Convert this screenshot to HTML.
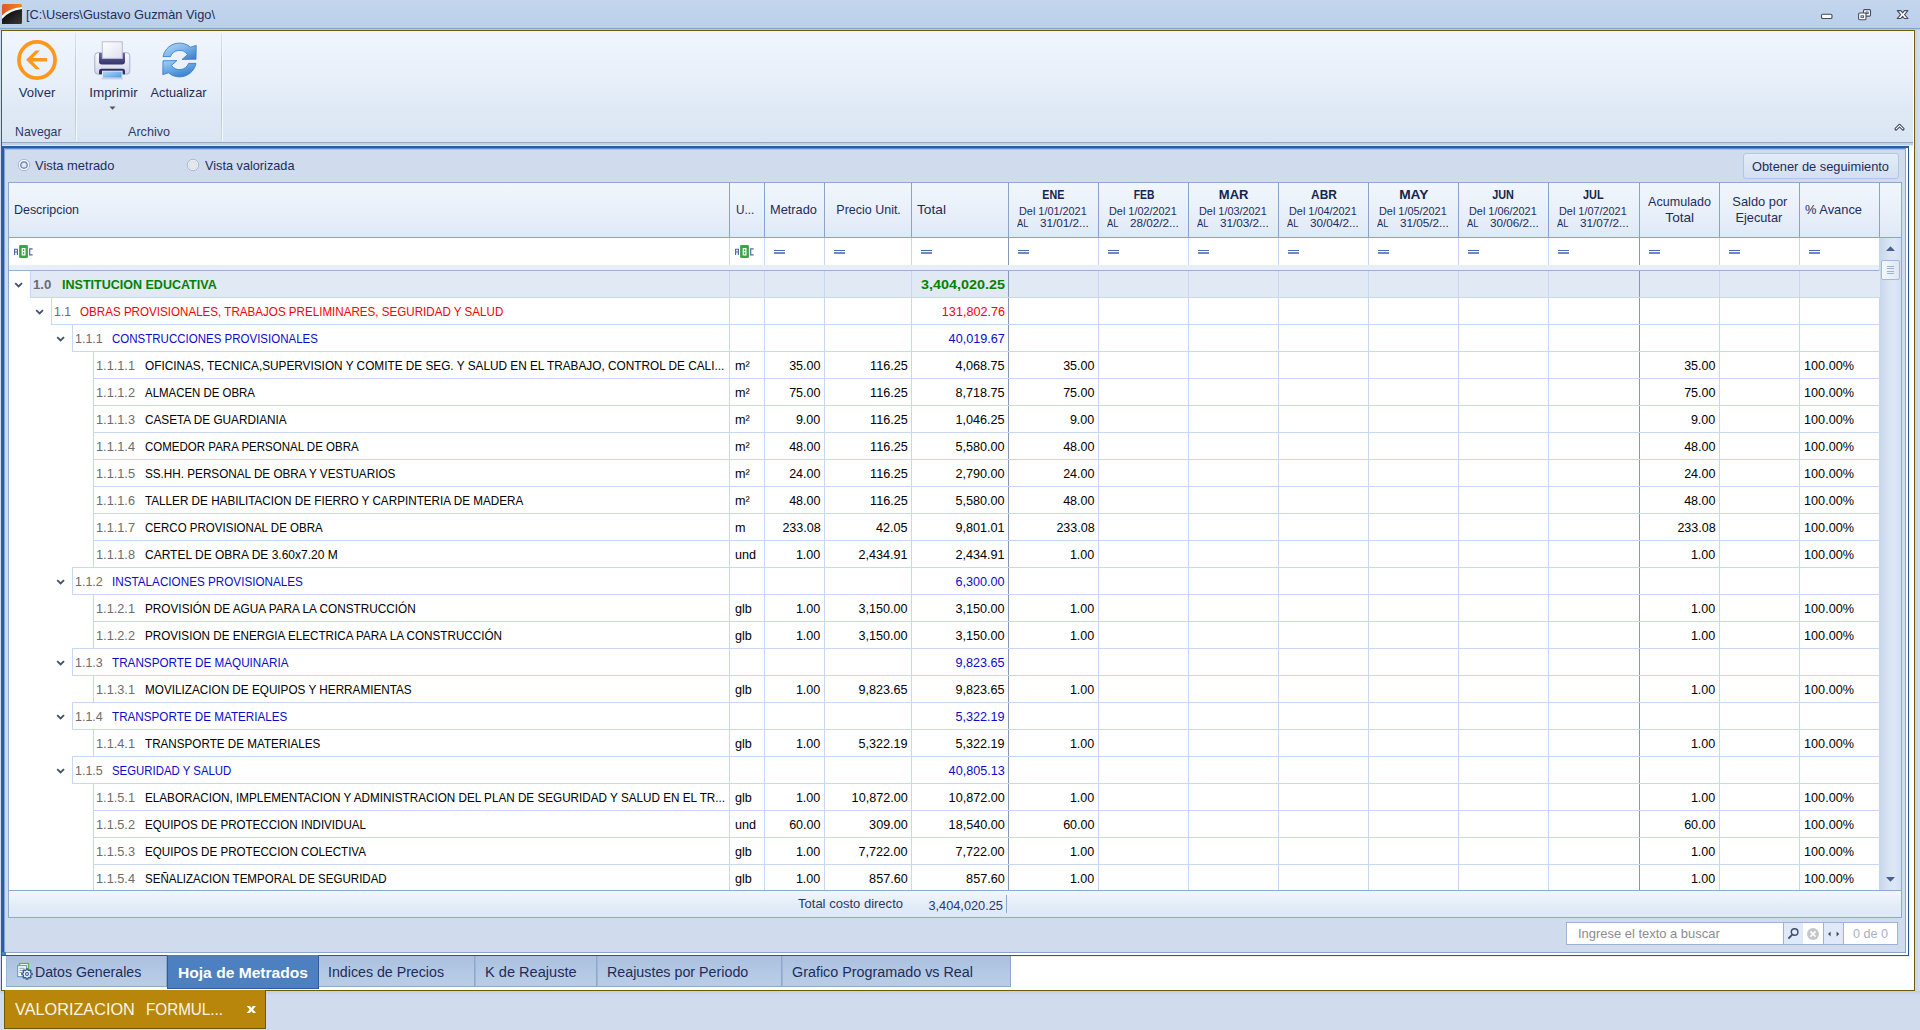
<!DOCTYPE html>
<html><head><meta charset="utf-8"><title>Valorizacion</title>
<style>
html,body{margin:0;padding:0}
body{width:1920px;height:1030px;overflow:hidden;position:relative;background:#d0dcee;font-family:"Liberation Sans", sans-serif}
body>div,body>svg,body>span{position:absolute}
.t{white-space:pre;display:inline-block}
</style></head><body>
<div style="left:0px;top:0px;width:1920px;height:28px;background:linear-gradient(#c3d6ee,#bccfe9);"></div>
<div style="left:0px;top:28px;width:1920px;height:1px;background:#86a2c6;"></div>
<div style="left:0px;top:29px;width:1920px;height:1px;background:#b4c8e3;"></div>
<svg style="left:2px;top:4px" width="20" height="20" viewBox="0 0 20 20"><defs><linearGradient id="ig" x1="0" y1="0" x2="1" y2="0"><stop offset="0" stop-color="#e0562a"/><stop offset="1" stop-color="#f8861c"/></linearGradient><linearGradient id="ib" x1="0" y1="0" x2="1" y2="1"><stop offset="0" stop-color="#000"/><stop offset="1" stop-color="#3a3a3a"/></linearGradient></defs><rect width="20" height="20" rx="1.5" fill="url(#ig)"/><path d="M0 20 L0 14 Q5 6 20 4.5 L20 18.5 Q20 20 18.5 20 Z" fill="url(#ib)"/><path d="M0 11.5 Q6 4.5 20 3 L20 5 Q7 6.5 0 15 Z" fill="#fff"/></svg>
<span class="t" style="left:26px;transform-origin:0 0;top:7.7955px;font-size:13px;line-height:13px;color:#1e2c5c;transform:scaleX(0.9846);">[C:\Users\Gustavo Guzmàn Vigo\</span>
<svg style="left:1816px;top:6px" width="100" height="18" viewBox="0 0 100 18">
<rect x="5.5" y="8.3" width="10.5" height="4.2" rx="1.3" fill="#fff" stroke="#444a63" stroke-width="1.1"/>
<rect x="47.5" y="3.6" width="7" height="6.5" rx="1.2" fill="#fff" stroke="#444a63" stroke-width="1.1"/><rect x="50" y="6" width="2.2" height="1.6" fill="#fff" stroke="#444a63" stroke-width="0.9"/>
<rect x="42.6" y="7" width="7.4" height="6.8" rx="1.2" fill="#fff" stroke="#444a63" stroke-width="1.1"/><rect x="45" y="9.8" width="2.6" height="1.6" fill="#fff" stroke="#444a63" stroke-width="0.9"/>
<path d="M81.3 4.6 L84.9 4.6 L86.6 6.9 L88.3 4.6 L91.9 4.6 L88.6 8.6 L92 12.5 L88.4 12.5 L86.6 10.3 L84.8 12.5 L81.2 12.5 L84.6 8.6 Z" fill="#fff" stroke="#444a63" stroke-width="1.1" stroke-linejoin="round"/>
</svg>
<div style="left:1px;top:30px;width:1914px;height:961px;background:#fff;border:1px solid #6e5c06;box-sizing:border-box;"></div>
<div style="left:1915px;top:30px;width:5px;height:961px;background:linear-gradient(90deg,#c6d5ea,#d3e0f1);"></div>
<div style="left:2px;top:31px;width:1911px;height:111px;background:linear-gradient(#f0f5fd 0%,#e9f0fa 40%,#dfe9f6 70%,#dae5f3 100%);"></div>
<div style="left:2px;top:142px;width:1911px;height:1px;background:#93a8c6;"></div>
<div style="left:2px;top:143px;width:1911px;height:2px;background:#c4d1e3;"></div>
<div style="left:2px;top:145px;width:1911px;height:1px;background:#e0e9f5;"></div>
<div style="left:75px;top:33px;width:1px;height:108px;background:linear-gradient(#dbe4f1,#bccadf 30%,#bccadf 80%,#cfdaea);"></div>
<div style="left:76px;top:33px;width:1px;height:108px;background:#f3f7fc;"></div>
<div style="left:221px;top:33px;width:1px;height:108px;background:linear-gradient(#dbe4f1,#bccadf 30%,#bccadf 80%,#cfdaea);"></div>
<div style="left:222px;top:33px;width:1px;height:108px;background:#f3f7fc;"></div>
<svg style="left:14px;top:37px" width="46" height="46" viewBox="14 37 46 46">
<circle cx="37" cy="60" r="18.05" fill="none" stroke="#ff9719" stroke-width="3.75"/>
<path d="M26.1 59.8 L35.6 50.4 L40.1 50.4 L32.4 58.1 L47 58.1 L47 61.5 L32.4 61.5 L40.1 69.3 L35.6 69.3 Z" fill="#ff9719"/>
</svg>
<span class="t" style="left:18.9297px;transform-origin:50% 0;top:85.9955px;font-size:13px;line-height:13px;color:#1e2c5c;transform:scaleX(1.0099);">Volver</span>
<svg style="left:92px;top:39px" width="40" height="42" viewBox="92 39 40 42"><defs>
<linearGradient id="pp" x1="0" y1="0" x2="1" y2="1"><stop offset="0" stop-color="#ffffff"/><stop offset="1" stop-color="#dfe0ee"/></linearGradient>
<linearGradient id="pb" x1="0" y1="0" x2="0" y2="1"><stop offset="0" stop-color="#fbfbfe"/><stop offset="1" stop-color="#d3d6e9"/></linearGradient>
<linearGradient id="pd" x1="0" y1="0" x2="0" y2="1"><stop offset="0" stop-color="#6a6aa2"/><stop offset="0.55" stop-color="#4a4a84"/><stop offset="1" stop-color="#35356a"/></linearGradient>
<linearGradient id="pt" x1="0" y1="0" x2="1" y2="1"><stop offset="0" stop-color="#b4dbf7"/><stop offset="1" stop-color="#4a97e2"/></linearGradient></defs>
<rect x="94.8" y="52.7" width="35" height="21.4" rx="3" fill="url(#pb)" stroke="#a9aed0" stroke-width="1"/>
<path d="M99 53 H125 V61.5 Q125 64.4 122 64.4 H102 Q99 64.4 99 61.5 Z" fill="url(#pd)"/>
<rect x="102.3" y="41.8" width="20" height="16.6" fill="url(#pp)" stroke="#b9bbd8" stroke-width="1"/>
<path d="M99 74.2 V71 Q99 68.8 101.5 68.8 H122.5 Q125 68.8 125 71 V74.2 Z" fill="#2f2f60"/>
<rect x="102.5" y="71.2" width="19.6" height="6.9" fill="url(#pt)" stroke="#e4e8f6" stroke-width="1"/>
<path d="M101.5 78.8 H123" stroke="#b9bbd8" stroke-width="0.8"/>
</svg>
<span class="t" style="left:89.7313px;transform-origin:50% 0;top:85.9955px;font-size:13px;line-height:13px;color:#1e2c5c;transform:scaleX(1.0333);">Imprimir</span>
<svg style="left:109px;top:106px" width="8" height="5"><path d="M0.5 0.5 L6.5 0.5 L3.5 3.8 Z" fill="#555"/></svg>
<svg style="left:159px;top:40px" width="40" height="38" viewBox="159 40 40 38"><defs>
<linearGradient id="rg" x1="0" y1="0" x2="1" y2="1"><stop offset="0" stop-color="#b9dbf6"/><stop offset="0.5" stop-color="#7db5ea"/><stop offset="1" stop-color="#3579cb"/></linearGradient>
<linearGradient id="rg2" x1="0" y1="0" x2="0.6" y2="1"><stop offset="0" stop-color="#a9d1f3"/><stop offset="0.5" stop-color="#6aa8e6"/><stop offset="1" stop-color="#3a80d1"/></linearGradient></defs>
<path d="M163 56.6 A16.85 16.85 0 0 1 190.5 47.2 L196.2 45.4 L196 59.2 L182.1 59.4 L187.5 54.7 A9.6 9.6 0 0 0 170.5 56.6 Z" fill="url(#rg)" stroke="#3a7fd0" stroke-width="0.9" stroke-linejoin="round"/>
<path d="M196 63.4 A16.85 16.85 0 0 1 168.5 72.8 L162.8 74.6 L163 60.8 L176.9 60.6 L171.5 65.3 A9.6 9.6 0 0 0 188.5 63.4 Z" fill="url(#rg2)" stroke="#3a7fd0" stroke-width="0.9" stroke-linejoin="round"/>
</svg>
<span class="t" style="left:150.461px;transform-origin:50% 0;top:85.9955px;font-size:13px;line-height:13px;color:#1e2c5c;transform:scaleX(0.9811);">Actualizar</span>
<span class="t" style="left:15.2px;transform-origin:0 0;top:124.995px;font-size:13px;line-height:13px;color:#2b3a6b;transform:scaleX(0.9463);">Navegar</span>
<span class="t" style="left:128px;transform-origin:0 0;top:124.995px;font-size:13px;line-height:13px;color:#2b3a6b;transform:scaleX(0.9686);">Archivo</span>
<svg style="left:1893px;top:121px" width="14" height="11"><path d="M3 8 L6.5 4.5 L10 8" fill="none" stroke="#2b3350" stroke-width="3.1" stroke-linejoin="round" stroke-linecap="round"/><path d="M3.1 7.9 L6.5 4.6 L9.9 7.9" fill="none" stroke="#fff" stroke-width="1.25" stroke-linecap="round"/></svg>
<div style="left:2px;top:146px;width:1907px;height:810px;background:#fff;"></div>
<div style="left:5px;top:150px;width:1901px;height:803px;background:#d0dcee;"></div>
<div style="left:2px;top:146px;width:1907px;height:2px;background:#2d5ca6;"></div>
<div style="left:2px;top:148px;width:1907px;height:1px;background:#5e8ccd;"></div>
<div style="left:2px;top:149px;width:1907px;height:1px;background:#a7c0e1;"></div>
<div style="left:2px;top:146px;width:2px;height:810px;background:#2d5ca6;"></div>
<div style="left:4px;top:148px;width:1px;height:805px;background:#7fa2d6;"></div>
<div style="left:1905px;top:150px;width:1px;height:803px;background:#8ba5cd;"></div>
<div style="left:1906px;top:148px;width:2px;height:807px;background:#fff;"></div>
<div style="left:1908px;top:146px;width:1px;height:810px;background:#2a5298;"></div>
<div style="left:5px;top:952px;width:1901px;height:1px;background:#8ba5cd;"></div>
<div style="left:5px;top:953px;width:1903px;height:2px;background:#fff;"></div>
<div style="left:2px;top:952px;width:4px;height:3px;background:#4a7fcb;"></div>
<div style="left:2px;top:955px;width:1907px;height:1px;background:#2a5298;"></div>
<div style="left:1909px;top:150px;width:1px;height:807px;background:#f4f2ee;"></div>
<div style="left:6px;top:956px;width:1904px;height:1px;background:#f4f2ee;"></div>
<svg style="left:15.6px;top:156.8px" width="16" height="16" viewBox="0 0 16 16"><circle cx="8" cy="8" r="5.7" fill="#fff" stroke="#a3b7d8" stroke-width="1"/><circle cx="8" cy="8" r="3.2" fill="#dfe9f6" stroke="#5f7fb3" stroke-width="1.25"/></svg>
<svg style="left:185.4px;top:156.8px" width="16" height="16" viewBox="0 0 16 16"><circle cx="8" cy="8" r="5.7" fill="#fff" stroke="#a3b7d8" stroke-width="1"/><circle cx="8" cy="8" r="4.1" fill="#e6e7ea" stroke="#d3d6dc" stroke-width="0.8"/></svg>
<span class="t" style="left:35px;transform-origin:0 0;top:158.695px;font-size:13px;line-height:13px;color:#1e2c5c;transform:scaleX(0.9941);">Vista metrado</span>
<span class="t" style="left:205px;transform-origin:0 0;top:158.695px;font-size:13px;line-height:13px;color:#1e2c5c;transform:scaleX(0.9776);">Vista valorizada</span>
<div style="left:1743px;top:153px;width:156px;height:26px;background:linear-gradient(#e3ecf8,#d3e0f1);border:1px solid #b4c6e0;border-radius:3px;box-sizing:border-box;"></div>
<span class="t" style="left:1752.2px;transform-origin:0 0;top:159.895px;font-size:13px;line-height:13px;color:#1e2c5c;transform:scaleX(0.9873);">Obtener de seguimiento</span>
<div style="left:8px;top:182px;width:1894px;height:736px;background:#fff;border:1px solid #8fa8cd;box-sizing:border-box;"></div>
<div style="left:9px;top:183px;width:1892px;height:54px;background:linear-gradient(#f1f6fc 0%,#eaf1fa 45%,#dfe9f6 100%);"></div>
<div style="left:9px;top:237px;width:1892px;height:1px;background:#8aa3c8;"></div>
<div style="left:729px;top:183px;width:1px;height:54px;background:#8aa3c8;"></div>
<div style="left:764px;top:183px;width:1px;height:54px;background:#8aa3c8;"></div>
<div style="left:824px;top:183px;width:1px;height:54px;background:#8aa3c8;"></div>
<div style="left:911px;top:183px;width:1px;height:54px;background:#8aa3c8;"></div>
<div style="left:1008px;top:183px;width:1px;height:54px;background:#8aa3c8;"></div>
<div style="left:1098px;top:183px;width:1px;height:54px;background:#8aa3c8;"></div>
<div style="left:1188px;top:183px;width:1px;height:54px;background:#8aa3c8;"></div>
<div style="left:1278px;top:183px;width:1px;height:54px;background:#8aa3c8;"></div>
<div style="left:1368px;top:183px;width:1px;height:54px;background:#8aa3c8;"></div>
<div style="left:1458px;top:183px;width:1px;height:54px;background:#8aa3c8;"></div>
<div style="left:1548px;top:183px;width:1px;height:54px;background:#8aa3c8;"></div>
<div style="left:1639px;top:183px;width:1px;height:54px;background:#8aa3c8;"></div>
<div style="left:1719px;top:183px;width:1px;height:54px;background:#8aa3c8;"></div>
<div style="left:1799px;top:183px;width:1px;height:54px;background:#8aa3c8;"></div>
<div style="left:1879px;top:183px;width:1px;height:54px;background:#8aa3c8;"></div>
<span class="t" style="left:14px;transform-origin:0 0;top:203.195px;font-size:13px;line-height:13px;color:#1e2c5c;transform:scaleX(0.9570);">Descripcion</span>
<span class="t" style="left:735.5px;transform-origin:0 0;top:203.195px;font-size:13px;line-height:13px;color:#1e2c5c;transform:scaleX(0.9044);">U...</span>
<span class="t" style="left:770px;transform-origin:0 0;top:203.195px;font-size:13px;line-height:13px;color:#1e2c5c;transform:scaleX(0.9853);">Metrado</span>
<span class="t" style="left:834.598px;transform-origin:50% 0;top:203.195px;font-size:13px;line-height:13px;color:#1e2c5c;transform:scaleX(0.9598);">Precio Unit.</span>
<span class="t" style="left:917px;transform-origin:0 0;top:203.195px;font-size:13px;line-height:13px;color:#1e2c5c;transform:scaleX(1.0557);">Total</span>
<span class="t" style="left:1041.16px;transform-origin:50% 0;top:188.842px;font-size:12px;line-height:12px;color:#15254f;font-weight:bold;transform:scaleX(0.8911);">ENE</span>
<span class="t" style="left:1019px;transform-origin:0 0;top:205.689px;font-size:11px;line-height:11px;color:#1e2c5c;transform:scaleX(0.9883);">Del 1/01/2021</span>
<span class="t" style="left:1016.8px;transform-origin:0 0;top:218.288px;font-size:11px;line-height:11px;color:#1e2c5c;transform:scaleX(0.8538);">AL</span>
<span class="t" style="left:1043.42px;transform-origin:100% 0;top:218.288px;font-size:11px;line-height:11px;color:#1e2c5c;transform:scaleX(1.0681);">31/01/2...</span>
<span class="t" style="left:1131.5px;transform-origin:50% 0;top:188.842px;font-size:12px;line-height:12px;color:#15254f;font-weight:bold;transform:scaleX(0.8625);">FEB</span>
<span class="t" style="left:1109px;transform-origin:0 0;top:205.689px;font-size:11px;line-height:11px;color:#1e2c5c;transform:scaleX(0.9883);">Del 1/02/2021</span>
<span class="t" style="left:1106.8px;transform-origin:0 0;top:218.288px;font-size:11px;line-height:11px;color:#1e2c5c;transform:scaleX(0.8538);">AL</span>
<span class="t" style="left:1133.42px;transform-origin:100% 0;top:218.288px;font-size:11px;line-height:11px;color:#1e2c5c;transform:scaleX(1.0681);">28/02/2...</span>
<span class="t" style="left:1219.84px;transform-origin:50% 0;top:188.842px;font-size:12px;line-height:12px;color:#15254f;font-weight:bold;transform:scaleX(1.0831);">MAR</span>
<span class="t" style="left:1199px;transform-origin:0 0;top:205.689px;font-size:11px;line-height:11px;color:#1e2c5c;transform:scaleX(0.9883);">Del 1/03/2021</span>
<span class="t" style="left:1196.8px;transform-origin:0 0;top:218.288px;font-size:11px;line-height:11px;color:#1e2c5c;transform:scaleX(0.8538);">AL</span>
<span class="t" style="left:1223.42px;transform-origin:100% 0;top:218.288px;font-size:11px;line-height:11px;color:#1e2c5c;transform:scaleX(1.0681);">31/03/2...</span>
<span class="t" style="left:1310.5px;transform-origin:50% 0;top:188.842px;font-size:12px;line-height:12px;color:#15254f;font-weight:bold;transform:scaleX(0.9923);">ABR</span>
<span class="t" style="left:1289px;transform-origin:0 0;top:205.689px;font-size:11px;line-height:11px;color:#1e2c5c;transform:scaleX(0.9883);">Del 1/04/2021</span>
<span class="t" style="left:1286.8px;transform-origin:0 0;top:218.288px;font-size:11px;line-height:11px;color:#1e2c5c;transform:scaleX(0.8538);">AL</span>
<span class="t" style="left:1313.42px;transform-origin:100% 0;top:218.288px;font-size:11px;line-height:11px;color:#1e2c5c;transform:scaleX(1.0681);">30/04/2...</span>
<span class="t" style="left:1400.71px;transform-origin:50% 0;top:188.842px;font-size:12px;line-height:12px;color:#15254f;font-weight:bold;transform:scaleX(1.1455);">MAY</span>
<span class="t" style="left:1379px;transform-origin:0 0;top:205.689px;font-size:11px;line-height:11px;color:#1e2c5c;transform:scaleX(0.9883);">Del 1/05/2021</span>
<span class="t" style="left:1376.8px;transform-origin:0 0;top:218.288px;font-size:11px;line-height:11px;color:#1e2c5c;transform:scaleX(0.8538);">AL</span>
<span class="t" style="left:1403.42px;transform-origin:100% 0;top:218.288px;font-size:11px;line-height:11px;color:#1e2c5c;transform:scaleX(1.0681);">31/05/2...</span>
<span class="t" style="left:1491.49px;transform-origin:50% 0;top:188.842px;font-size:12px;line-height:12px;color:#15254f;font-weight:bold;transform:scaleX(0.9036);">JUN</span>
<span class="t" style="left:1469px;transform-origin:0 0;top:205.689px;font-size:11px;line-height:11px;color:#1e2c5c;transform:scaleX(0.9883);">Del 1/06/2021</span>
<span class="t" style="left:1466.8px;transform-origin:0 0;top:218.288px;font-size:11px;line-height:11px;color:#1e2c5c;transform:scaleX(0.8538);">AL</span>
<span class="t" style="left:1493.42px;transform-origin:100% 0;top:218.288px;font-size:11px;line-height:11px;color:#1e2c5c;transform:scaleX(1.0681);">30/06/2...</span>
<span class="t" style="left:1582.16px;transform-origin:50% 0;top:188.842px;font-size:12px;line-height:12px;color:#15254f;font-weight:bold;transform:scaleX(0.9042);">JUL</span>
<span class="t" style="left:1559px;transform-origin:0 0;top:205.689px;font-size:11px;line-height:11px;color:#1e2c5c;transform:scaleX(0.9883);">Del 1/07/2021</span>
<span class="t" style="left:1556.8px;transform-origin:0 0;top:218.288px;font-size:11px;line-height:11px;color:#1e2c5c;transform:scaleX(0.8538);">AL</span>
<span class="t" style="left:1583.42px;transform-origin:100% 0;top:218.288px;font-size:11px;line-height:11px;color:#1e2c5c;transform:scaleX(1.0681);">31/07/2...</span>
<span class="t" style="left:1646.88px;transform-origin:50% 0;top:194.995px;font-size:13px;line-height:13px;color:#1e2c5c;transform:scaleX(0.9655);">Acumulado</span>
<span class="t" style="left:1665.67px;transform-origin:50% 0;top:210.995px;font-size:13px;line-height:13px;color:#1e2c5c;transform:scaleX(1.0485);">Total</span>
<span class="t" style="left:1731.67px;transform-origin:50% 0;top:194.995px;font-size:13px;line-height:13px;color:#1e2c5c;transform:scaleX(0.9882);">Saldo por</span>
<span class="t" style="left:1735.35px;transform-origin:50% 0;top:210.995px;font-size:13px;line-height:13px;color:#1e2c5c;transform:scaleX(0.9811);">Ejecutar</span>
<span class="t" style="left:1805px;transform-origin:0 0;top:203.195px;font-size:13px;line-height:13px;color:#1e2c5c;transform:scaleX(0.9897);">% Avance</span>
<div style="left:9px;top:265px;width:1871px;height:5px;background:#e8effa;"></div>
<div style="left:9px;top:270px;width:1871px;height:1px;background:#9ab1d4;"></div>
<div style="left:729px;top:238px;width:1px;height:27px;background:#c6d8f3;"></div>
<div style="left:764px;top:238px;width:1px;height:27px;background:#c6d8f3;"></div>
<div style="left:824px;top:238px;width:1px;height:27px;background:#c6d8f3;"></div>
<div style="left:911px;top:238px;width:1px;height:27px;background:#c6d8f3;"></div>
<div style="left:1008px;top:238px;width:1px;height:27px;background:#8497b5;"></div>
<div style="left:1098px;top:238px;width:1px;height:27px;background:#c6d8f3;"></div>
<div style="left:1188px;top:238px;width:1px;height:27px;background:#c6d8f3;"></div>
<div style="left:1278px;top:238px;width:1px;height:27px;background:#c6d8f3;"></div>
<div style="left:1368px;top:238px;width:1px;height:27px;background:#c6d8f3;"></div>
<div style="left:1458px;top:238px;width:1px;height:27px;background:#c6d8f3;"></div>
<div style="left:1548px;top:238px;width:1px;height:27px;background:#c6d8f3;"></div>
<div style="left:1639px;top:238px;width:1px;height:27px;background:#8497b5;"></div>
<div style="left:1719px;top:238px;width:1px;height:27px;background:#c6d8f3;"></div>
<div style="left:1799px;top:238px;width:1px;height:27px;background:#c6d8f3;"></div>
<svg style="left:14px;top:244px" width="21" height="15" viewBox="0 0 21 15" shape-rendering="auto"><rect x="5.1" y="0.9" width="8.8" height="13.1" rx="1.2" fill="#3aa546"/><path d="M0.6 11 V5.2 H3.4 V11 M0.6 8 H3.4" fill="none" stroke="#4a68a8" stroke-width="1.15"/><path d="M8.3 4.7 H10.9 V10.9 H8.3 Z M8.3 7.7 H10.9" fill="none" stroke="#fff" stroke-width="1.25"/><path d="M18.6 4.8 H15.7 V10.9 H18.6" fill="none" stroke="#4a68a8" stroke-width="1.15"/></svg>
<svg style="left:735px;top:244px" width="21" height="15" viewBox="0 0 21 15" shape-rendering="auto"><rect x="5.1" y="0.9" width="8.8" height="13.1" rx="1.2" fill="#3aa546"/><path d="M0.6 11 V5.2 H3.4 V11 M0.6 8 H3.4" fill="none" stroke="#4a68a8" stroke-width="1.15"/><path d="M8.3 4.7 H10.9 V10.9 H8.3 Z M8.3 7.7 H10.9" fill="none" stroke="#fff" stroke-width="1.25"/><path d="M18.6 4.8 H15.7 V10.9 H18.6" fill="none" stroke="#4a68a8" stroke-width="1.15"/></svg>
<div style="left:774px;top:249.7px;width:11.3px;height:1.25px;background:#4a69ad;"></div>
<div style="left:774px;top:252.4px;width:11.3px;height:1.5px;background:#6f8ac2;"></div>
<div style="left:834px;top:249.7px;width:11.3px;height:1.25px;background:#4a69ad;"></div>
<div style="left:834px;top:252.4px;width:11.3px;height:1.5px;background:#6f8ac2;"></div>
<div style="left:921px;top:249.7px;width:11.3px;height:1.25px;background:#4a69ad;"></div>
<div style="left:921px;top:252.4px;width:11.3px;height:1.5px;background:#6f8ac2;"></div>
<div style="left:1018px;top:249.7px;width:11.3px;height:1.25px;background:#4a69ad;"></div>
<div style="left:1018px;top:252.4px;width:11.3px;height:1.5px;background:#6f8ac2;"></div>
<div style="left:1108px;top:249.7px;width:11.3px;height:1.25px;background:#4a69ad;"></div>
<div style="left:1108px;top:252.4px;width:11.3px;height:1.5px;background:#6f8ac2;"></div>
<div style="left:1198px;top:249.7px;width:11.3px;height:1.25px;background:#4a69ad;"></div>
<div style="left:1198px;top:252.4px;width:11.3px;height:1.5px;background:#6f8ac2;"></div>
<div style="left:1288px;top:249.7px;width:11.3px;height:1.25px;background:#4a69ad;"></div>
<div style="left:1288px;top:252.4px;width:11.3px;height:1.5px;background:#6f8ac2;"></div>
<div style="left:1378px;top:249.7px;width:11.3px;height:1.25px;background:#4a69ad;"></div>
<div style="left:1378px;top:252.4px;width:11.3px;height:1.5px;background:#6f8ac2;"></div>
<div style="left:1468px;top:249.7px;width:11.3px;height:1.25px;background:#4a69ad;"></div>
<div style="left:1468px;top:252.4px;width:11.3px;height:1.5px;background:#6f8ac2;"></div>
<div style="left:1558px;top:249.7px;width:11.3px;height:1.25px;background:#4a69ad;"></div>
<div style="left:1558px;top:252.4px;width:11.3px;height:1.5px;background:#6f8ac2;"></div>
<div style="left:1649px;top:249.7px;width:11.3px;height:1.25px;background:#4a69ad;"></div>
<div style="left:1649px;top:252.4px;width:11.3px;height:1.5px;background:#6f8ac2;"></div>
<div style="left:1729px;top:249.7px;width:11.3px;height:1.25px;background:#4a69ad;"></div>
<div style="left:1729px;top:252.4px;width:11.3px;height:1.5px;background:#6f8ac2;"></div>
<div style="left:1809px;top:249.7px;width:11.3px;height:1.25px;background:#4a69ad;"></div>
<div style="left:1809px;top:252.4px;width:11.3px;height:1.5px;background:#6f8ac2;"></div>
<div style="left:1879px;top:238px;width:22px;height:652px;background:linear-gradient(90deg,#c6d5ec,#d9e4f3 45%,#dde7f5 70%,#d3dff0);"></div>
<svg style="left:1886px;top:246px" width="9" height="5"><path d="M0 5 L4.5 0.2 L9 5 Z" fill="#4b5f8f"/></svg>
<svg style="left:1886px;top:876.5px" width="9" height="5"><path d="M0 0 L4.5 4.8 L9 0 Z" fill="#4b5f8f"/></svg>
<div style="left:1881px;top:260px;width:19px;height:20px;background:linear-gradient(90deg,#f4f8fd,#dde8f6);border:1px solid #a3b8da;border-radius:2px;box-sizing:border-box;"></div>
<div style="left:1886.5px;top:265.5px;width:7.5px;height:1px;background:#9fb2d2;"></div>
<div style="left:1886.5px;top:268px;width:7.5px;height:1px;background:#9fb2d2;"></div>
<div style="left:1886.5px;top:270.5px;width:7.5px;height:1px;background:#9fb2d2;"></div>
<div style="left:1886.5px;top:273px;width:7.5px;height:1px;background:#9fb2d2;"></div>
<div style="left:30px;top:271px;width:1850px;height:26px;background:#e1e9f5;"></div>
<div style="left:30px;top:271px;width:1px;height:27px;background:#c6d8f3;"></div>
<div style="left:729px;top:271px;width:1px;height:26px;background:#c6d8f3;"></div>
<div style="left:764px;top:271px;width:1px;height:26px;background:#c6d8f3;"></div>
<div style="left:824px;top:271px;width:1px;height:26px;background:#c6d8f3;"></div>
<div style="left:911px;top:271px;width:1px;height:26px;background:#c6d8f3;"></div>
<div style="left:1008px;top:271px;width:1px;height:27px;background:#8497b5;"></div>
<div style="left:1098px;top:271px;width:1px;height:26px;background:#c6d8f3;"></div>
<div style="left:1188px;top:271px;width:1px;height:26px;background:#c6d8f3;"></div>
<div style="left:1278px;top:271px;width:1px;height:26px;background:#c6d8f3;"></div>
<div style="left:1368px;top:271px;width:1px;height:26px;background:#c6d8f3;"></div>
<div style="left:1458px;top:271px;width:1px;height:26px;background:#c6d8f3;"></div>
<div style="left:1548px;top:271px;width:1px;height:26px;background:#c6d8f3;"></div>
<div style="left:1639px;top:271px;width:1px;height:27px;background:#8497b5;"></div>
<div style="left:1719px;top:271px;width:1px;height:26px;background:#c6d8f3;"></div>
<div style="left:1799px;top:271px;width:1px;height:26px;background:#c6d8f3;"></div>
<svg style="left:14px;top:282.3px" width="10" height="7"><path d="M1.2 1.1 L4.6 4.5 L8 1.1" fill="none" stroke="#44506e" stroke-width="1.8"/></svg>
<span class="t" style="left:32.8px;transform-origin:0 0;top:277.995px;font-size:13px;line-height:13px;color:#6c6c6c;font-weight:bold;transform:scaleX(1.0178);">1.0</span>
<span class="t" style="left:62px;transform-origin:0 0;top:277.995px;font-size:13px;line-height:13px;color:#038203;font-weight:bold;transform:scaleX(0.9634);">INSTITUCION EDUCATIVA</span>
<span class="t" style="left:928.894px;transform-origin:100% 0;top:277.995px;font-size:13px;line-height:13px;color:#038203;font-weight:bold;transform:scaleX(1.1050);">3,404,020.25</span>
<div style="left:30px;top:297px;width:1850px;height:1px;background:#c6d8f3;"></div>
<div style="left:51px;top:298px;width:1px;height:27px;background:#c6d8f3;"></div>
<div style="left:729px;top:298px;width:1px;height:26px;background:#c6d8f3;"></div>
<div style="left:764px;top:298px;width:1px;height:26px;background:#c6d8f3;"></div>
<div style="left:824px;top:298px;width:1px;height:26px;background:#c6d8f3;"></div>
<div style="left:911px;top:298px;width:1px;height:26px;background:#c6d8f3;"></div>
<div style="left:1008px;top:298px;width:1px;height:27px;background:#8497b5;"></div>
<div style="left:1098px;top:298px;width:1px;height:26px;background:#c6d8f3;"></div>
<div style="left:1188px;top:298px;width:1px;height:26px;background:#c6d8f3;"></div>
<div style="left:1278px;top:298px;width:1px;height:26px;background:#c6d8f3;"></div>
<div style="left:1368px;top:298px;width:1px;height:26px;background:#c6d8f3;"></div>
<div style="left:1458px;top:298px;width:1px;height:26px;background:#c6d8f3;"></div>
<div style="left:1548px;top:298px;width:1px;height:26px;background:#c6d8f3;"></div>
<div style="left:1639px;top:298px;width:1px;height:27px;background:#8497b5;"></div>
<div style="left:1719px;top:298px;width:1px;height:26px;background:#c6d8f3;"></div>
<div style="left:1799px;top:298px;width:1px;height:26px;background:#c6d8f3;"></div>
<svg style="left:35px;top:309.3px" width="10" height="7"><path d="M1.2 1.1 L4.6 4.5 L8 1.1" fill="none" stroke="#44506e" stroke-width="1.8"/></svg>
<span class="t" style="left:53.8px;transform-origin:0 0;top:304.995px;font-size:13px;line-height:13px;color:#6c6c6c;transform:scaleX(0.9404);">1.1</span>
<span class="t" style="left:80px;transform-origin:0 0;top:304.995px;font-size:13px;line-height:13px;color:#ff0000;transform:scaleX(0.8932);">OBRAS PROVISIONALES, TRABAJOS PRELIMINARES, SEGURIDAD Y SALUD</span>
<span class="t" style="left:939.722px;transform-origin:100% 0;top:304.995px;font-size:13px;line-height:13px;color:#ff0000;transform:scaleX(0.9720);">131,802.76</span>
<div style="left:51px;top:324px;width:1829px;height:1px;background:#c6d8f3;"></div>
<div style="left:72px;top:325px;width:1px;height:27px;background:#c6d8f3;"></div>
<div style="left:729px;top:325px;width:1px;height:26px;background:#c6d8f3;"></div>
<div style="left:764px;top:325px;width:1px;height:26px;background:#c6d8f3;"></div>
<div style="left:824px;top:325px;width:1px;height:26px;background:#c6d8f3;"></div>
<div style="left:911px;top:325px;width:1px;height:26px;background:#c6d8f3;"></div>
<div style="left:1008px;top:325px;width:1px;height:27px;background:#8497b5;"></div>
<div style="left:1098px;top:325px;width:1px;height:26px;background:#c6d8f3;"></div>
<div style="left:1188px;top:325px;width:1px;height:26px;background:#c6d8f3;"></div>
<div style="left:1278px;top:325px;width:1px;height:26px;background:#c6d8f3;"></div>
<div style="left:1368px;top:325px;width:1px;height:26px;background:#c6d8f3;"></div>
<div style="left:1458px;top:325px;width:1px;height:26px;background:#c6d8f3;"></div>
<div style="left:1548px;top:325px;width:1px;height:26px;background:#c6d8f3;"></div>
<div style="left:1639px;top:325px;width:1px;height:27px;background:#8497b5;"></div>
<div style="left:1719px;top:325px;width:1px;height:26px;background:#c6d8f3;"></div>
<div style="left:1799px;top:325px;width:1px;height:26px;background:#c6d8f3;"></div>
<svg style="left:56px;top:336.3px" width="10" height="7"><path d="M1.2 1.1 L4.6 4.5 L8 1.1" fill="none" stroke="#44506e" stroke-width="1.8"/></svg>
<span class="t" style="left:74.8px;transform-origin:0 0;top:331.995px;font-size:13px;line-height:13px;color:#6c6c6c;transform:scaleX(0.9612);">1.1.1</span>
<span class="t" style="left:112.4px;transform-origin:0 0;top:331.995px;font-size:13px;line-height:13px;color:#0a0acd;transform:scaleX(0.8852);">CONSTRUCCIONES PROVISIONALES</span>
<span class="t" style="left:946.956px;transform-origin:100% 0;top:331.995px;font-size:13px;line-height:13px;color:#0a0acd;transform:scaleX(0.9720);">40,019.67</span>
<div style="left:72px;top:351px;width:1808px;height:1px;background:#c6d8f3;"></div>
<div style="left:93px;top:352px;width:1px;height:27px;background:#c6d8f3;"></div>
<div style="left:729px;top:352px;width:1px;height:26px;background:#c6d8f3;"></div>
<div style="left:764px;top:352px;width:1px;height:26px;background:#c6d8f3;"></div>
<div style="left:824px;top:352px;width:1px;height:26px;background:#c6d8f3;"></div>
<div style="left:911px;top:352px;width:1px;height:26px;background:#c6d8f3;"></div>
<div style="left:1008px;top:352px;width:1px;height:27px;background:#8497b5;"></div>
<div style="left:1098px;top:352px;width:1px;height:26px;background:#c6d8f3;"></div>
<div style="left:1188px;top:352px;width:1px;height:26px;background:#c6d8f3;"></div>
<div style="left:1278px;top:352px;width:1px;height:26px;background:#c6d8f3;"></div>
<div style="left:1368px;top:352px;width:1px;height:26px;background:#c6d8f3;"></div>
<div style="left:1458px;top:352px;width:1px;height:26px;background:#c6d8f3;"></div>
<div style="left:1548px;top:352px;width:1px;height:26px;background:#c6d8f3;"></div>
<div style="left:1639px;top:352px;width:1px;height:27px;background:#8497b5;"></div>
<div style="left:1719px;top:352px;width:1px;height:26px;background:#c6d8f3;"></div>
<div style="left:1799px;top:352px;width:1px;height:26px;background:#c6d8f3;"></div>
<span class="t" style="left:95.8px;transform-origin:0 0;top:358.995px;font-size:13px;line-height:13px;color:#6c6c6c;transform:scaleX(0.9807);">1.1.1.1</span>
<span class="t" style="left:145px;transform-origin:0 0;top:358.995px;font-size:13px;line-height:13px;color:#000;transform:scaleX(0.9078);">OFICINAS, TECNICA,SUPERVISION Y COMITE DE SEG. Y SALUD EN EL TRABAJO, CONTROL DE CALI...</span>
<span class="t" style="left:734.5px;transform-origin:0 0;top:358.995px;font-size:13px;line-height:13px;color:#000;transform:scaleX(0.9700);">m²</span>
<span class="t" style="left:788.053px;transform-origin:100% 0;top:358.995px;font-size:13px;line-height:13px;color:#000;transform:scaleX(0.9650);">35.00</span>
<span class="t" style="left:868.803px;transform-origin:100% 0;top:358.995px;font-size:13px;line-height:13px;color:#000;transform:scaleX(0.9720);">116.25</span>
<span class="t" style="left:954.191px;transform-origin:100% 0;top:358.995px;font-size:13px;line-height:13px;color:#000;transform:scaleX(0.9720);">4,068.75</span>
<span class="t" style="left:1061.85px;transform-origin:100% 0;top:358.995px;font-size:13px;line-height:13px;color:#000;transform:scaleX(0.9650);">35.00</span>
<span class="t" style="left:1683.05px;transform-origin:100% 0;top:358.995px;font-size:13px;line-height:13px;color:#000;transform:scaleX(0.9650);">35.00</span>
<span class="t" style="left:1803.7px;transform-origin:0 0;top:358.995px;font-size:13px;line-height:13px;color:#000;transform:scaleX(0.9741);">100.00%</span>
<div style="left:93px;top:378px;width:1787px;height:1px;background:#c6d8f3;"></div>
<div style="left:93px;top:379px;width:1px;height:27px;background:#c6d8f3;"></div>
<div style="left:729px;top:379px;width:1px;height:26px;background:#c6d8f3;"></div>
<div style="left:764px;top:379px;width:1px;height:26px;background:#c6d8f3;"></div>
<div style="left:824px;top:379px;width:1px;height:26px;background:#c6d8f3;"></div>
<div style="left:911px;top:379px;width:1px;height:26px;background:#c6d8f3;"></div>
<div style="left:1008px;top:379px;width:1px;height:27px;background:#8497b5;"></div>
<div style="left:1098px;top:379px;width:1px;height:26px;background:#c6d8f3;"></div>
<div style="left:1188px;top:379px;width:1px;height:26px;background:#c6d8f3;"></div>
<div style="left:1278px;top:379px;width:1px;height:26px;background:#c6d8f3;"></div>
<div style="left:1368px;top:379px;width:1px;height:26px;background:#c6d8f3;"></div>
<div style="left:1458px;top:379px;width:1px;height:26px;background:#c6d8f3;"></div>
<div style="left:1548px;top:379px;width:1px;height:26px;background:#c6d8f3;"></div>
<div style="left:1639px;top:379px;width:1px;height:27px;background:#8497b5;"></div>
<div style="left:1719px;top:379px;width:1px;height:26px;background:#c6d8f3;"></div>
<div style="left:1799px;top:379px;width:1px;height:26px;background:#c6d8f3;"></div>
<span class="t" style="left:95.8px;transform-origin:0 0;top:385.995px;font-size:13px;line-height:13px;color:#6c6c6c;transform:scaleX(0.9807);">1.1.1.2</span>
<span class="t" style="left:145px;transform-origin:0 0;top:385.995px;font-size:13px;line-height:13px;color:#000;transform:scaleX(0.8801);">ALMACEN DE OBRA</span>
<span class="t" style="left:734.5px;transform-origin:0 0;top:385.995px;font-size:13px;line-height:13px;color:#000;transform:scaleX(0.9700);">m²</span>
<span class="t" style="left:788.053px;transform-origin:100% 0;top:385.995px;font-size:13px;line-height:13px;color:#000;transform:scaleX(0.9650);">75.00</span>
<span class="t" style="left:868.803px;transform-origin:100% 0;top:385.995px;font-size:13px;line-height:13px;color:#000;transform:scaleX(0.9720);">116.25</span>
<span class="t" style="left:954.191px;transform-origin:100% 0;top:385.995px;font-size:13px;line-height:13px;color:#000;transform:scaleX(0.9720);">8,718.75</span>
<span class="t" style="left:1061.85px;transform-origin:100% 0;top:385.995px;font-size:13px;line-height:13px;color:#000;transform:scaleX(0.9650);">75.00</span>
<span class="t" style="left:1683.05px;transform-origin:100% 0;top:385.995px;font-size:13px;line-height:13px;color:#000;transform:scaleX(0.9650);">75.00</span>
<span class="t" style="left:1803.7px;transform-origin:0 0;top:385.995px;font-size:13px;line-height:13px;color:#000;transform:scaleX(0.9741);">100.00%</span>
<div style="left:93px;top:405px;width:1787px;height:1px;background:#c6d8f3;"></div>
<div style="left:93px;top:406px;width:1px;height:27px;background:#c6d8f3;"></div>
<div style="left:729px;top:406px;width:1px;height:26px;background:#c6d8f3;"></div>
<div style="left:764px;top:406px;width:1px;height:26px;background:#c6d8f3;"></div>
<div style="left:824px;top:406px;width:1px;height:26px;background:#c6d8f3;"></div>
<div style="left:911px;top:406px;width:1px;height:26px;background:#c6d8f3;"></div>
<div style="left:1008px;top:406px;width:1px;height:27px;background:#8497b5;"></div>
<div style="left:1098px;top:406px;width:1px;height:26px;background:#c6d8f3;"></div>
<div style="left:1188px;top:406px;width:1px;height:26px;background:#c6d8f3;"></div>
<div style="left:1278px;top:406px;width:1px;height:26px;background:#c6d8f3;"></div>
<div style="left:1368px;top:406px;width:1px;height:26px;background:#c6d8f3;"></div>
<div style="left:1458px;top:406px;width:1px;height:26px;background:#c6d8f3;"></div>
<div style="left:1548px;top:406px;width:1px;height:26px;background:#c6d8f3;"></div>
<div style="left:1639px;top:406px;width:1px;height:27px;background:#8497b5;"></div>
<div style="left:1719px;top:406px;width:1px;height:26px;background:#c6d8f3;"></div>
<div style="left:1799px;top:406px;width:1px;height:26px;background:#c6d8f3;"></div>
<span class="t" style="left:95.8px;transform-origin:0 0;top:412.995px;font-size:13px;line-height:13px;color:#6c6c6c;transform:scaleX(0.9807);">1.1.1.3</span>
<span class="t" style="left:145px;transform-origin:0 0;top:412.995px;font-size:13px;line-height:13px;color:#000;transform:scaleX(0.9053);">CASETA DE GUARDIANIA</span>
<span class="t" style="left:734.5px;transform-origin:0 0;top:412.995px;font-size:13px;line-height:13px;color:#000;transform:scaleX(0.9700);">m²</span>
<span class="t" style="left:795.288px;transform-origin:100% 0;top:412.995px;font-size:13px;line-height:13px;color:#000;transform:scaleX(0.9650);">9.00</span>
<span class="t" style="left:868.803px;transform-origin:100% 0;top:412.995px;font-size:13px;line-height:13px;color:#000;transform:scaleX(0.9720);">116.25</span>
<span class="t" style="left:954.191px;transform-origin:100% 0;top:412.995px;font-size:13px;line-height:13px;color:#000;transform:scaleX(0.9720);">1,046.25</span>
<span class="t" style="left:1069.09px;transform-origin:100% 0;top:412.995px;font-size:13px;line-height:13px;color:#000;transform:scaleX(0.9650);">9.00</span>
<span class="t" style="left:1690.29px;transform-origin:100% 0;top:412.995px;font-size:13px;line-height:13px;color:#000;transform:scaleX(0.9650);">9.00</span>
<span class="t" style="left:1803.7px;transform-origin:0 0;top:412.995px;font-size:13px;line-height:13px;color:#000;transform:scaleX(0.9741);">100.00%</span>
<div style="left:93px;top:432px;width:1787px;height:1px;background:#c6d8f3;"></div>
<div style="left:93px;top:433px;width:1px;height:27px;background:#c6d8f3;"></div>
<div style="left:729px;top:433px;width:1px;height:26px;background:#c6d8f3;"></div>
<div style="left:764px;top:433px;width:1px;height:26px;background:#c6d8f3;"></div>
<div style="left:824px;top:433px;width:1px;height:26px;background:#c6d8f3;"></div>
<div style="left:911px;top:433px;width:1px;height:26px;background:#c6d8f3;"></div>
<div style="left:1008px;top:433px;width:1px;height:27px;background:#8497b5;"></div>
<div style="left:1098px;top:433px;width:1px;height:26px;background:#c6d8f3;"></div>
<div style="left:1188px;top:433px;width:1px;height:26px;background:#c6d8f3;"></div>
<div style="left:1278px;top:433px;width:1px;height:26px;background:#c6d8f3;"></div>
<div style="left:1368px;top:433px;width:1px;height:26px;background:#c6d8f3;"></div>
<div style="left:1458px;top:433px;width:1px;height:26px;background:#c6d8f3;"></div>
<div style="left:1548px;top:433px;width:1px;height:26px;background:#c6d8f3;"></div>
<div style="left:1639px;top:433px;width:1px;height:27px;background:#8497b5;"></div>
<div style="left:1719px;top:433px;width:1px;height:26px;background:#c6d8f3;"></div>
<div style="left:1799px;top:433px;width:1px;height:26px;background:#c6d8f3;"></div>
<span class="t" style="left:95.8px;transform-origin:0 0;top:439.995px;font-size:13px;line-height:13px;color:#6c6c6c;transform:scaleX(0.9807);">1.1.1.4</span>
<span class="t" style="left:145px;transform-origin:0 0;top:439.995px;font-size:13px;line-height:13px;color:#000;transform:scaleX(0.8857);">COMEDOR PARA PERSONAL DE OBRA</span>
<span class="t" style="left:734.5px;transform-origin:0 0;top:439.995px;font-size:13px;line-height:13px;color:#000;transform:scaleX(0.9700);">m²</span>
<span class="t" style="left:788.053px;transform-origin:100% 0;top:439.995px;font-size:13px;line-height:13px;color:#000;transform:scaleX(0.9650);">48.00</span>
<span class="t" style="left:868.803px;transform-origin:100% 0;top:439.995px;font-size:13px;line-height:13px;color:#000;transform:scaleX(0.9720);">116.25</span>
<span class="t" style="left:954.191px;transform-origin:100% 0;top:439.995px;font-size:13px;line-height:13px;color:#000;transform:scaleX(0.9720);">5,580.00</span>
<span class="t" style="left:1061.85px;transform-origin:100% 0;top:439.995px;font-size:13px;line-height:13px;color:#000;transform:scaleX(0.9650);">48.00</span>
<span class="t" style="left:1683.05px;transform-origin:100% 0;top:439.995px;font-size:13px;line-height:13px;color:#000;transform:scaleX(0.9650);">48.00</span>
<span class="t" style="left:1803.7px;transform-origin:0 0;top:439.995px;font-size:13px;line-height:13px;color:#000;transform:scaleX(0.9741);">100.00%</span>
<div style="left:93px;top:459px;width:1787px;height:1px;background:#c6d8f3;"></div>
<div style="left:93px;top:460px;width:1px;height:27px;background:#c6d8f3;"></div>
<div style="left:729px;top:460px;width:1px;height:26px;background:#c6d8f3;"></div>
<div style="left:764px;top:460px;width:1px;height:26px;background:#c6d8f3;"></div>
<div style="left:824px;top:460px;width:1px;height:26px;background:#c6d8f3;"></div>
<div style="left:911px;top:460px;width:1px;height:26px;background:#c6d8f3;"></div>
<div style="left:1008px;top:460px;width:1px;height:27px;background:#8497b5;"></div>
<div style="left:1098px;top:460px;width:1px;height:26px;background:#c6d8f3;"></div>
<div style="left:1188px;top:460px;width:1px;height:26px;background:#c6d8f3;"></div>
<div style="left:1278px;top:460px;width:1px;height:26px;background:#c6d8f3;"></div>
<div style="left:1368px;top:460px;width:1px;height:26px;background:#c6d8f3;"></div>
<div style="left:1458px;top:460px;width:1px;height:26px;background:#c6d8f3;"></div>
<div style="left:1548px;top:460px;width:1px;height:26px;background:#c6d8f3;"></div>
<div style="left:1639px;top:460px;width:1px;height:27px;background:#8497b5;"></div>
<div style="left:1719px;top:460px;width:1px;height:26px;background:#c6d8f3;"></div>
<div style="left:1799px;top:460px;width:1px;height:26px;background:#c6d8f3;"></div>
<span class="t" style="left:95.8px;transform-origin:0 0;top:466.995px;font-size:13px;line-height:13px;color:#6c6c6c;transform:scaleX(0.9807);">1.1.1.5</span>
<span class="t" style="left:145px;transform-origin:0 0;top:466.995px;font-size:13px;line-height:13px;color:#000;transform:scaleX(0.9007);">SS.HH. PERSONAL DE OBRA Y VESTUARIOS</span>
<span class="t" style="left:734.5px;transform-origin:0 0;top:466.995px;font-size:13px;line-height:13px;color:#000;transform:scaleX(0.9700);">m²</span>
<span class="t" style="left:788.053px;transform-origin:100% 0;top:466.995px;font-size:13px;line-height:13px;color:#000;transform:scaleX(0.9650);">24.00</span>
<span class="t" style="left:868.803px;transform-origin:100% 0;top:466.995px;font-size:13px;line-height:13px;color:#000;transform:scaleX(0.9720);">116.25</span>
<span class="t" style="left:954.191px;transform-origin:100% 0;top:466.995px;font-size:13px;line-height:13px;color:#000;transform:scaleX(0.9720);">2,790.00</span>
<span class="t" style="left:1061.85px;transform-origin:100% 0;top:466.995px;font-size:13px;line-height:13px;color:#000;transform:scaleX(0.9650);">24.00</span>
<span class="t" style="left:1683.05px;transform-origin:100% 0;top:466.995px;font-size:13px;line-height:13px;color:#000;transform:scaleX(0.9650);">24.00</span>
<span class="t" style="left:1803.7px;transform-origin:0 0;top:466.995px;font-size:13px;line-height:13px;color:#000;transform:scaleX(0.9741);">100.00%</span>
<div style="left:93px;top:486px;width:1787px;height:1px;background:#c6d8f3;"></div>
<div style="left:93px;top:487px;width:1px;height:27px;background:#c6d8f3;"></div>
<div style="left:729px;top:487px;width:1px;height:26px;background:#c6d8f3;"></div>
<div style="left:764px;top:487px;width:1px;height:26px;background:#c6d8f3;"></div>
<div style="left:824px;top:487px;width:1px;height:26px;background:#c6d8f3;"></div>
<div style="left:911px;top:487px;width:1px;height:26px;background:#c6d8f3;"></div>
<div style="left:1008px;top:487px;width:1px;height:27px;background:#8497b5;"></div>
<div style="left:1098px;top:487px;width:1px;height:26px;background:#c6d8f3;"></div>
<div style="left:1188px;top:487px;width:1px;height:26px;background:#c6d8f3;"></div>
<div style="left:1278px;top:487px;width:1px;height:26px;background:#c6d8f3;"></div>
<div style="left:1368px;top:487px;width:1px;height:26px;background:#c6d8f3;"></div>
<div style="left:1458px;top:487px;width:1px;height:26px;background:#c6d8f3;"></div>
<div style="left:1548px;top:487px;width:1px;height:26px;background:#c6d8f3;"></div>
<div style="left:1639px;top:487px;width:1px;height:27px;background:#8497b5;"></div>
<div style="left:1719px;top:487px;width:1px;height:26px;background:#c6d8f3;"></div>
<div style="left:1799px;top:487px;width:1px;height:26px;background:#c6d8f3;"></div>
<span class="t" style="left:95.8px;transform-origin:0 0;top:493.995px;font-size:13px;line-height:13px;color:#6c6c6c;transform:scaleX(0.9807);">1.1.1.6</span>
<span class="t" style="left:145px;transform-origin:0 0;top:493.995px;font-size:13px;line-height:13px;color:#000;transform:scaleX(0.9003);">TALLER DE HABILITACION DE FIERRO Y CARPINTERIA DE MADERA</span>
<span class="t" style="left:734.5px;transform-origin:0 0;top:493.995px;font-size:13px;line-height:13px;color:#000;transform:scaleX(0.9700);">m²</span>
<span class="t" style="left:788.053px;transform-origin:100% 0;top:493.995px;font-size:13px;line-height:13px;color:#000;transform:scaleX(0.9650);">48.00</span>
<span class="t" style="left:868.803px;transform-origin:100% 0;top:493.995px;font-size:13px;line-height:13px;color:#000;transform:scaleX(0.9720);">116.25</span>
<span class="t" style="left:954.191px;transform-origin:100% 0;top:493.995px;font-size:13px;line-height:13px;color:#000;transform:scaleX(0.9720);">5,580.00</span>
<span class="t" style="left:1061.85px;transform-origin:100% 0;top:493.995px;font-size:13px;line-height:13px;color:#000;transform:scaleX(0.9650);">48.00</span>
<span class="t" style="left:1683.05px;transform-origin:100% 0;top:493.995px;font-size:13px;line-height:13px;color:#000;transform:scaleX(0.9650);">48.00</span>
<span class="t" style="left:1803.7px;transform-origin:0 0;top:493.995px;font-size:13px;line-height:13px;color:#000;transform:scaleX(0.9741);">100.00%</span>
<div style="left:93px;top:513px;width:1787px;height:1px;background:#c6d8f3;"></div>
<div style="left:93px;top:514px;width:1px;height:27px;background:#c6d8f3;"></div>
<div style="left:729px;top:514px;width:1px;height:26px;background:#c6d8f3;"></div>
<div style="left:764px;top:514px;width:1px;height:26px;background:#c6d8f3;"></div>
<div style="left:824px;top:514px;width:1px;height:26px;background:#c6d8f3;"></div>
<div style="left:911px;top:514px;width:1px;height:26px;background:#c6d8f3;"></div>
<div style="left:1008px;top:514px;width:1px;height:27px;background:#8497b5;"></div>
<div style="left:1098px;top:514px;width:1px;height:26px;background:#c6d8f3;"></div>
<div style="left:1188px;top:514px;width:1px;height:26px;background:#c6d8f3;"></div>
<div style="left:1278px;top:514px;width:1px;height:26px;background:#c6d8f3;"></div>
<div style="left:1368px;top:514px;width:1px;height:26px;background:#c6d8f3;"></div>
<div style="left:1458px;top:514px;width:1px;height:26px;background:#c6d8f3;"></div>
<div style="left:1548px;top:514px;width:1px;height:26px;background:#c6d8f3;"></div>
<div style="left:1639px;top:514px;width:1px;height:27px;background:#8497b5;"></div>
<div style="left:1719px;top:514px;width:1px;height:26px;background:#c6d8f3;"></div>
<div style="left:1799px;top:514px;width:1px;height:26px;background:#c6d8f3;"></div>
<span class="t" style="left:95.8px;transform-origin:0 0;top:520.995px;font-size:13px;line-height:13px;color:#6c6c6c;transform:scaleX(0.9807);">1.1.1.7</span>
<span class="t" style="left:145px;transform-origin:0 0;top:520.995px;font-size:13px;line-height:13px;color:#000;transform:scaleX(0.8870);">CERCO PROVISIONAL DE OBRA</span>
<span class="t" style="left:734.5px;transform-origin:0 0;top:520.995px;font-size:13px;line-height:13px;color:#000;transform:scaleX(0.9700);">m</span>
<span class="t" style="left:780.834px;transform-origin:100% 0;top:520.995px;font-size:13px;line-height:13px;color:#000;transform:scaleX(0.9650);">233.08</span>
<span class="t" style="left:875.053px;transform-origin:100% 0;top:520.995px;font-size:13px;line-height:13px;color:#000;transform:scaleX(0.9720);">42.05</span>
<span class="t" style="left:954.191px;transform-origin:100% 0;top:520.995px;font-size:13px;line-height:13px;color:#000;transform:scaleX(0.9720);">9,801.01</span>
<span class="t" style="left:1054.63px;transform-origin:100% 0;top:520.995px;font-size:13px;line-height:13px;color:#000;transform:scaleX(0.9650);">233.08</span>
<span class="t" style="left:1675.83px;transform-origin:100% 0;top:520.995px;font-size:13px;line-height:13px;color:#000;transform:scaleX(0.9650);">233.08</span>
<span class="t" style="left:1803.7px;transform-origin:0 0;top:520.995px;font-size:13px;line-height:13px;color:#000;transform:scaleX(0.9741);">100.00%</span>
<div style="left:93px;top:540px;width:1787px;height:1px;background:#c6d8f3;"></div>
<div style="left:93px;top:541px;width:1px;height:27px;background:#c6d8f3;"></div>
<div style="left:729px;top:541px;width:1px;height:26px;background:#c6d8f3;"></div>
<div style="left:764px;top:541px;width:1px;height:26px;background:#c6d8f3;"></div>
<div style="left:824px;top:541px;width:1px;height:26px;background:#c6d8f3;"></div>
<div style="left:911px;top:541px;width:1px;height:26px;background:#c6d8f3;"></div>
<div style="left:1008px;top:541px;width:1px;height:27px;background:#8497b5;"></div>
<div style="left:1098px;top:541px;width:1px;height:26px;background:#c6d8f3;"></div>
<div style="left:1188px;top:541px;width:1px;height:26px;background:#c6d8f3;"></div>
<div style="left:1278px;top:541px;width:1px;height:26px;background:#c6d8f3;"></div>
<div style="left:1368px;top:541px;width:1px;height:26px;background:#c6d8f3;"></div>
<div style="left:1458px;top:541px;width:1px;height:26px;background:#c6d8f3;"></div>
<div style="left:1548px;top:541px;width:1px;height:26px;background:#c6d8f3;"></div>
<div style="left:1639px;top:541px;width:1px;height:27px;background:#8497b5;"></div>
<div style="left:1719px;top:541px;width:1px;height:26px;background:#c6d8f3;"></div>
<div style="left:1799px;top:541px;width:1px;height:26px;background:#c6d8f3;"></div>
<span class="t" style="left:95.8px;transform-origin:0 0;top:547.995px;font-size:13px;line-height:13px;color:#6c6c6c;transform:scaleX(0.9807);">1.1.1.8</span>
<span class="t" style="left:145px;transform-origin:0 0;top:547.995px;font-size:13px;line-height:13px;color:#000;transform:scaleX(0.9228);">CARTEL DE OBRA DE 3.60x7.20 M</span>
<span class="t" style="left:734.5px;transform-origin:0 0;top:547.995px;font-size:13px;line-height:13px;color:#000;transform:scaleX(0.9700);">und</span>
<span class="t" style="left:795.288px;transform-origin:100% 0;top:547.995px;font-size:13px;line-height:13px;color:#000;transform:scaleX(0.9650);">1.00</span>
<span class="t" style="left:856.991px;transform-origin:100% 0;top:547.995px;font-size:13px;line-height:13px;color:#000;transform:scaleX(0.9720);">2,434.91</span>
<span class="t" style="left:954.191px;transform-origin:100% 0;top:547.995px;font-size:13px;line-height:13px;color:#000;transform:scaleX(0.9720);">2,434.91</span>
<span class="t" style="left:1069.09px;transform-origin:100% 0;top:547.995px;font-size:13px;line-height:13px;color:#000;transform:scaleX(0.9650);">1.00</span>
<span class="t" style="left:1690.29px;transform-origin:100% 0;top:547.995px;font-size:13px;line-height:13px;color:#000;transform:scaleX(0.9650);">1.00</span>
<span class="t" style="left:1803.7px;transform-origin:0 0;top:547.995px;font-size:13px;line-height:13px;color:#000;transform:scaleX(0.9741);">100.00%</span>
<div style="left:72px;top:567px;width:1808px;height:1px;background:#c6d8f3;"></div>
<div style="left:72px;top:568px;width:1px;height:27px;background:#c6d8f3;"></div>
<div style="left:729px;top:568px;width:1px;height:26px;background:#c6d8f3;"></div>
<div style="left:764px;top:568px;width:1px;height:26px;background:#c6d8f3;"></div>
<div style="left:824px;top:568px;width:1px;height:26px;background:#c6d8f3;"></div>
<div style="left:911px;top:568px;width:1px;height:26px;background:#c6d8f3;"></div>
<div style="left:1008px;top:568px;width:1px;height:27px;background:#8497b5;"></div>
<div style="left:1098px;top:568px;width:1px;height:26px;background:#c6d8f3;"></div>
<div style="left:1188px;top:568px;width:1px;height:26px;background:#c6d8f3;"></div>
<div style="left:1278px;top:568px;width:1px;height:26px;background:#c6d8f3;"></div>
<div style="left:1368px;top:568px;width:1px;height:26px;background:#c6d8f3;"></div>
<div style="left:1458px;top:568px;width:1px;height:26px;background:#c6d8f3;"></div>
<div style="left:1548px;top:568px;width:1px;height:26px;background:#c6d8f3;"></div>
<div style="left:1639px;top:568px;width:1px;height:27px;background:#8497b5;"></div>
<div style="left:1719px;top:568px;width:1px;height:26px;background:#c6d8f3;"></div>
<div style="left:1799px;top:568px;width:1px;height:26px;background:#c6d8f3;"></div>
<svg style="left:56px;top:579.3px" width="10" height="7"><path d="M1.2 1.1 L4.6 4.5 L8 1.1" fill="none" stroke="#44506e" stroke-width="1.8"/></svg>
<span class="t" style="left:74.8px;transform-origin:0 0;top:574.995px;font-size:13px;line-height:13px;color:#6c6c6c;transform:scaleX(0.9612);">1.1.2</span>
<span class="t" style="left:112.4px;transform-origin:0 0;top:574.995px;font-size:13px;line-height:13px;color:#0a0acd;transform:scaleX(0.8998);">INSTALACIONES PROVISIONALES</span>
<span class="t" style="left:954.191px;transform-origin:100% 0;top:574.995px;font-size:13px;line-height:13px;color:#0a0acd;transform:scaleX(0.9720);">6,300.00</span>
<div style="left:72px;top:594px;width:1808px;height:1px;background:#c6d8f3;"></div>
<div style="left:93px;top:595px;width:1px;height:27px;background:#c6d8f3;"></div>
<div style="left:729px;top:595px;width:1px;height:26px;background:#c6d8f3;"></div>
<div style="left:764px;top:595px;width:1px;height:26px;background:#c6d8f3;"></div>
<div style="left:824px;top:595px;width:1px;height:26px;background:#c6d8f3;"></div>
<div style="left:911px;top:595px;width:1px;height:26px;background:#c6d8f3;"></div>
<div style="left:1008px;top:595px;width:1px;height:27px;background:#8497b5;"></div>
<div style="left:1098px;top:595px;width:1px;height:26px;background:#c6d8f3;"></div>
<div style="left:1188px;top:595px;width:1px;height:26px;background:#c6d8f3;"></div>
<div style="left:1278px;top:595px;width:1px;height:26px;background:#c6d8f3;"></div>
<div style="left:1368px;top:595px;width:1px;height:26px;background:#c6d8f3;"></div>
<div style="left:1458px;top:595px;width:1px;height:26px;background:#c6d8f3;"></div>
<div style="left:1548px;top:595px;width:1px;height:26px;background:#c6d8f3;"></div>
<div style="left:1639px;top:595px;width:1px;height:27px;background:#8497b5;"></div>
<div style="left:1719px;top:595px;width:1px;height:26px;background:#c6d8f3;"></div>
<div style="left:1799px;top:595px;width:1px;height:26px;background:#c6d8f3;"></div>
<span class="t" style="left:95.8px;transform-origin:0 0;top:601.995px;font-size:13px;line-height:13px;color:#6c6c6c;transform:scaleX(0.9807);">1.1.2.1</span>
<span class="t" style="left:145px;transform-origin:0 0;top:601.995px;font-size:13px;line-height:13px;color:#000;transform:scaleX(0.9058);">PROVISIÓN DE AGUA PARA LA CONSTRUCCIÓN</span>
<span class="t" style="left:734.5px;transform-origin:0 0;top:601.995px;font-size:13px;line-height:13px;color:#000;transform:scaleX(0.9700);">glb</span>
<span class="t" style="left:795.288px;transform-origin:100% 0;top:601.995px;font-size:13px;line-height:13px;color:#000;transform:scaleX(0.9650);">1.00</span>
<span class="t" style="left:856.991px;transform-origin:100% 0;top:601.995px;font-size:13px;line-height:13px;color:#000;transform:scaleX(0.9720);">3,150.00</span>
<span class="t" style="left:954.191px;transform-origin:100% 0;top:601.995px;font-size:13px;line-height:13px;color:#000;transform:scaleX(0.9720);">3,150.00</span>
<span class="t" style="left:1069.09px;transform-origin:100% 0;top:601.995px;font-size:13px;line-height:13px;color:#000;transform:scaleX(0.9650);">1.00</span>
<span class="t" style="left:1690.29px;transform-origin:100% 0;top:601.995px;font-size:13px;line-height:13px;color:#000;transform:scaleX(0.9650);">1.00</span>
<span class="t" style="left:1803.7px;transform-origin:0 0;top:601.995px;font-size:13px;line-height:13px;color:#000;transform:scaleX(0.9741);">100.00%</span>
<div style="left:93px;top:621px;width:1787px;height:1px;background:#c6d8f3;"></div>
<div style="left:93px;top:622px;width:1px;height:27px;background:#c6d8f3;"></div>
<div style="left:729px;top:622px;width:1px;height:26px;background:#c6d8f3;"></div>
<div style="left:764px;top:622px;width:1px;height:26px;background:#c6d8f3;"></div>
<div style="left:824px;top:622px;width:1px;height:26px;background:#c6d8f3;"></div>
<div style="left:911px;top:622px;width:1px;height:26px;background:#c6d8f3;"></div>
<div style="left:1008px;top:622px;width:1px;height:27px;background:#8497b5;"></div>
<div style="left:1098px;top:622px;width:1px;height:26px;background:#c6d8f3;"></div>
<div style="left:1188px;top:622px;width:1px;height:26px;background:#c6d8f3;"></div>
<div style="left:1278px;top:622px;width:1px;height:26px;background:#c6d8f3;"></div>
<div style="left:1368px;top:622px;width:1px;height:26px;background:#c6d8f3;"></div>
<div style="left:1458px;top:622px;width:1px;height:26px;background:#c6d8f3;"></div>
<div style="left:1548px;top:622px;width:1px;height:26px;background:#c6d8f3;"></div>
<div style="left:1639px;top:622px;width:1px;height:27px;background:#8497b5;"></div>
<div style="left:1719px;top:622px;width:1px;height:26px;background:#c6d8f3;"></div>
<div style="left:1799px;top:622px;width:1px;height:26px;background:#c6d8f3;"></div>
<span class="t" style="left:95.8px;transform-origin:0 0;top:628.995px;font-size:13px;line-height:13px;color:#6c6c6c;transform:scaleX(0.9807);">1.1.2.2</span>
<span class="t" style="left:145px;transform-origin:0 0;top:628.995px;font-size:13px;line-height:13px;color:#000;transform:scaleX(0.8991);">PROVISION DE ENERGIA ELECTRICA PARA LA CONSTRUCCIÓN</span>
<span class="t" style="left:734.5px;transform-origin:0 0;top:628.995px;font-size:13px;line-height:13px;color:#000;transform:scaleX(0.9700);">glb</span>
<span class="t" style="left:795.288px;transform-origin:100% 0;top:628.995px;font-size:13px;line-height:13px;color:#000;transform:scaleX(0.9650);">1.00</span>
<span class="t" style="left:856.991px;transform-origin:100% 0;top:628.995px;font-size:13px;line-height:13px;color:#000;transform:scaleX(0.9720);">3,150.00</span>
<span class="t" style="left:954.191px;transform-origin:100% 0;top:628.995px;font-size:13px;line-height:13px;color:#000;transform:scaleX(0.9720);">3,150.00</span>
<span class="t" style="left:1069.09px;transform-origin:100% 0;top:628.995px;font-size:13px;line-height:13px;color:#000;transform:scaleX(0.9650);">1.00</span>
<span class="t" style="left:1690.29px;transform-origin:100% 0;top:628.995px;font-size:13px;line-height:13px;color:#000;transform:scaleX(0.9650);">1.00</span>
<span class="t" style="left:1803.7px;transform-origin:0 0;top:628.995px;font-size:13px;line-height:13px;color:#000;transform:scaleX(0.9741);">100.00%</span>
<div style="left:72px;top:648px;width:1808px;height:1px;background:#c6d8f3;"></div>
<div style="left:72px;top:649px;width:1px;height:27px;background:#c6d8f3;"></div>
<div style="left:729px;top:649px;width:1px;height:26px;background:#c6d8f3;"></div>
<div style="left:764px;top:649px;width:1px;height:26px;background:#c6d8f3;"></div>
<div style="left:824px;top:649px;width:1px;height:26px;background:#c6d8f3;"></div>
<div style="left:911px;top:649px;width:1px;height:26px;background:#c6d8f3;"></div>
<div style="left:1008px;top:649px;width:1px;height:27px;background:#8497b5;"></div>
<div style="left:1098px;top:649px;width:1px;height:26px;background:#c6d8f3;"></div>
<div style="left:1188px;top:649px;width:1px;height:26px;background:#c6d8f3;"></div>
<div style="left:1278px;top:649px;width:1px;height:26px;background:#c6d8f3;"></div>
<div style="left:1368px;top:649px;width:1px;height:26px;background:#c6d8f3;"></div>
<div style="left:1458px;top:649px;width:1px;height:26px;background:#c6d8f3;"></div>
<div style="left:1548px;top:649px;width:1px;height:26px;background:#c6d8f3;"></div>
<div style="left:1639px;top:649px;width:1px;height:27px;background:#8497b5;"></div>
<div style="left:1719px;top:649px;width:1px;height:26px;background:#c6d8f3;"></div>
<div style="left:1799px;top:649px;width:1px;height:26px;background:#c6d8f3;"></div>
<svg style="left:56px;top:660.3px" width="10" height="7"><path d="M1.2 1.1 L4.6 4.5 L8 1.1" fill="none" stroke="#44506e" stroke-width="1.8"/></svg>
<span class="t" style="left:74.8px;transform-origin:0 0;top:655.995px;font-size:13px;line-height:13px;color:#6c6c6c;transform:scaleX(0.9612);">1.1.3</span>
<span class="t" style="left:112.4px;transform-origin:0 0;top:655.995px;font-size:13px;line-height:13px;color:#0a0acd;transform:scaleX(0.8999);">TRANSPORTE DE MAQUINARIA</span>
<span class="t" style="left:954.191px;transform-origin:100% 0;top:655.995px;font-size:13px;line-height:13px;color:#0a0acd;transform:scaleX(0.9720);">9,823.65</span>
<div style="left:72px;top:675px;width:1808px;height:1px;background:#c6d8f3;"></div>
<div style="left:93px;top:676px;width:1px;height:27px;background:#c6d8f3;"></div>
<div style="left:729px;top:676px;width:1px;height:26px;background:#c6d8f3;"></div>
<div style="left:764px;top:676px;width:1px;height:26px;background:#c6d8f3;"></div>
<div style="left:824px;top:676px;width:1px;height:26px;background:#c6d8f3;"></div>
<div style="left:911px;top:676px;width:1px;height:26px;background:#c6d8f3;"></div>
<div style="left:1008px;top:676px;width:1px;height:27px;background:#8497b5;"></div>
<div style="left:1098px;top:676px;width:1px;height:26px;background:#c6d8f3;"></div>
<div style="left:1188px;top:676px;width:1px;height:26px;background:#c6d8f3;"></div>
<div style="left:1278px;top:676px;width:1px;height:26px;background:#c6d8f3;"></div>
<div style="left:1368px;top:676px;width:1px;height:26px;background:#c6d8f3;"></div>
<div style="left:1458px;top:676px;width:1px;height:26px;background:#c6d8f3;"></div>
<div style="left:1548px;top:676px;width:1px;height:26px;background:#c6d8f3;"></div>
<div style="left:1639px;top:676px;width:1px;height:27px;background:#8497b5;"></div>
<div style="left:1719px;top:676px;width:1px;height:26px;background:#c6d8f3;"></div>
<div style="left:1799px;top:676px;width:1px;height:26px;background:#c6d8f3;"></div>
<span class="t" style="left:95.8px;transform-origin:0 0;top:682.995px;font-size:13px;line-height:13px;color:#6c6c6c;transform:scaleX(0.9807);">1.1.3.1</span>
<span class="t" style="left:145px;transform-origin:0 0;top:682.995px;font-size:13px;line-height:13px;color:#000;transform:scaleX(0.9027);">MOVILIZACION DE EQUIPOS Y HERRAMIENTAS</span>
<span class="t" style="left:734.5px;transform-origin:0 0;top:682.995px;font-size:13px;line-height:13px;color:#000;transform:scaleX(0.9700);">glb</span>
<span class="t" style="left:795.288px;transform-origin:100% 0;top:682.995px;font-size:13px;line-height:13px;color:#000;transform:scaleX(0.9650);">1.00</span>
<span class="t" style="left:856.991px;transform-origin:100% 0;top:682.995px;font-size:13px;line-height:13px;color:#000;transform:scaleX(0.9720);">9,823.65</span>
<span class="t" style="left:954.191px;transform-origin:100% 0;top:682.995px;font-size:13px;line-height:13px;color:#000;transform:scaleX(0.9720);">9,823.65</span>
<span class="t" style="left:1069.09px;transform-origin:100% 0;top:682.995px;font-size:13px;line-height:13px;color:#000;transform:scaleX(0.9650);">1.00</span>
<span class="t" style="left:1690.29px;transform-origin:100% 0;top:682.995px;font-size:13px;line-height:13px;color:#000;transform:scaleX(0.9650);">1.00</span>
<span class="t" style="left:1803.7px;transform-origin:0 0;top:682.995px;font-size:13px;line-height:13px;color:#000;transform:scaleX(0.9741);">100.00%</span>
<div style="left:72px;top:702px;width:1808px;height:1px;background:#c6d8f3;"></div>
<div style="left:72px;top:703px;width:1px;height:27px;background:#c6d8f3;"></div>
<div style="left:729px;top:703px;width:1px;height:26px;background:#c6d8f3;"></div>
<div style="left:764px;top:703px;width:1px;height:26px;background:#c6d8f3;"></div>
<div style="left:824px;top:703px;width:1px;height:26px;background:#c6d8f3;"></div>
<div style="left:911px;top:703px;width:1px;height:26px;background:#c6d8f3;"></div>
<div style="left:1008px;top:703px;width:1px;height:27px;background:#8497b5;"></div>
<div style="left:1098px;top:703px;width:1px;height:26px;background:#c6d8f3;"></div>
<div style="left:1188px;top:703px;width:1px;height:26px;background:#c6d8f3;"></div>
<div style="left:1278px;top:703px;width:1px;height:26px;background:#c6d8f3;"></div>
<div style="left:1368px;top:703px;width:1px;height:26px;background:#c6d8f3;"></div>
<div style="left:1458px;top:703px;width:1px;height:26px;background:#c6d8f3;"></div>
<div style="left:1548px;top:703px;width:1px;height:26px;background:#c6d8f3;"></div>
<div style="left:1639px;top:703px;width:1px;height:27px;background:#8497b5;"></div>
<div style="left:1719px;top:703px;width:1px;height:26px;background:#c6d8f3;"></div>
<div style="left:1799px;top:703px;width:1px;height:26px;background:#c6d8f3;"></div>
<svg style="left:56px;top:714.3px" width="10" height="7"><path d="M1.2 1.1 L4.6 4.5 L8 1.1" fill="none" stroke="#44506e" stroke-width="1.8"/></svg>
<span class="t" style="left:74.8px;transform-origin:0 0;top:709.995px;font-size:13px;line-height:13px;color:#6c6c6c;transform:scaleX(0.9612);">1.1.4</span>
<span class="t" style="left:112.4px;transform-origin:0 0;top:709.995px;font-size:13px;line-height:13px;color:#0a0acd;transform:scaleX(0.8977);">TRANSPORTE DE MATERIALES</span>
<span class="t" style="left:954.191px;transform-origin:100% 0;top:709.995px;font-size:13px;line-height:13px;color:#0a0acd;transform:scaleX(0.9720);">5,322.19</span>
<div style="left:72px;top:729px;width:1808px;height:1px;background:#c6d8f3;"></div>
<div style="left:93px;top:730px;width:1px;height:27px;background:#c6d8f3;"></div>
<div style="left:729px;top:730px;width:1px;height:26px;background:#c6d8f3;"></div>
<div style="left:764px;top:730px;width:1px;height:26px;background:#c6d8f3;"></div>
<div style="left:824px;top:730px;width:1px;height:26px;background:#c6d8f3;"></div>
<div style="left:911px;top:730px;width:1px;height:26px;background:#c6d8f3;"></div>
<div style="left:1008px;top:730px;width:1px;height:27px;background:#8497b5;"></div>
<div style="left:1098px;top:730px;width:1px;height:26px;background:#c6d8f3;"></div>
<div style="left:1188px;top:730px;width:1px;height:26px;background:#c6d8f3;"></div>
<div style="left:1278px;top:730px;width:1px;height:26px;background:#c6d8f3;"></div>
<div style="left:1368px;top:730px;width:1px;height:26px;background:#c6d8f3;"></div>
<div style="left:1458px;top:730px;width:1px;height:26px;background:#c6d8f3;"></div>
<div style="left:1548px;top:730px;width:1px;height:26px;background:#c6d8f3;"></div>
<div style="left:1639px;top:730px;width:1px;height:27px;background:#8497b5;"></div>
<div style="left:1719px;top:730px;width:1px;height:26px;background:#c6d8f3;"></div>
<div style="left:1799px;top:730px;width:1px;height:26px;background:#c6d8f3;"></div>
<span class="t" style="left:95.8px;transform-origin:0 0;top:736.995px;font-size:13px;line-height:13px;color:#6c6c6c;transform:scaleX(0.9807);">1.1.4.1</span>
<span class="t" style="left:145px;transform-origin:0 0;top:736.995px;font-size:13px;line-height:13px;color:#000;transform:scaleX(0.8977);">TRANSPORTE DE MATERIALES</span>
<span class="t" style="left:734.5px;transform-origin:0 0;top:736.995px;font-size:13px;line-height:13px;color:#000;transform:scaleX(0.9700);">glb</span>
<span class="t" style="left:795.288px;transform-origin:100% 0;top:736.995px;font-size:13px;line-height:13px;color:#000;transform:scaleX(0.9650);">1.00</span>
<span class="t" style="left:856.991px;transform-origin:100% 0;top:736.995px;font-size:13px;line-height:13px;color:#000;transform:scaleX(0.9720);">5,322.19</span>
<span class="t" style="left:954.191px;transform-origin:100% 0;top:736.995px;font-size:13px;line-height:13px;color:#000;transform:scaleX(0.9720);">5,322.19</span>
<span class="t" style="left:1069.09px;transform-origin:100% 0;top:736.995px;font-size:13px;line-height:13px;color:#000;transform:scaleX(0.9650);">1.00</span>
<span class="t" style="left:1690.29px;transform-origin:100% 0;top:736.995px;font-size:13px;line-height:13px;color:#000;transform:scaleX(0.9650);">1.00</span>
<span class="t" style="left:1803.7px;transform-origin:0 0;top:736.995px;font-size:13px;line-height:13px;color:#000;transform:scaleX(0.9741);">100.00%</span>
<div style="left:72px;top:756px;width:1808px;height:1px;background:#c6d8f3;"></div>
<div style="left:72px;top:757px;width:1px;height:27px;background:#c6d8f3;"></div>
<div style="left:729px;top:757px;width:1px;height:26px;background:#c6d8f3;"></div>
<div style="left:764px;top:757px;width:1px;height:26px;background:#c6d8f3;"></div>
<div style="left:824px;top:757px;width:1px;height:26px;background:#c6d8f3;"></div>
<div style="left:911px;top:757px;width:1px;height:26px;background:#c6d8f3;"></div>
<div style="left:1008px;top:757px;width:1px;height:27px;background:#8497b5;"></div>
<div style="left:1098px;top:757px;width:1px;height:26px;background:#c6d8f3;"></div>
<div style="left:1188px;top:757px;width:1px;height:26px;background:#c6d8f3;"></div>
<div style="left:1278px;top:757px;width:1px;height:26px;background:#c6d8f3;"></div>
<div style="left:1368px;top:757px;width:1px;height:26px;background:#c6d8f3;"></div>
<div style="left:1458px;top:757px;width:1px;height:26px;background:#c6d8f3;"></div>
<div style="left:1548px;top:757px;width:1px;height:26px;background:#c6d8f3;"></div>
<div style="left:1639px;top:757px;width:1px;height:27px;background:#8497b5;"></div>
<div style="left:1719px;top:757px;width:1px;height:26px;background:#c6d8f3;"></div>
<div style="left:1799px;top:757px;width:1px;height:26px;background:#c6d8f3;"></div>
<svg style="left:56px;top:768.3px" width="10" height="7"><path d="M1.2 1.1 L4.6 4.5 L8 1.1" fill="none" stroke="#44506e" stroke-width="1.8"/></svg>
<span class="t" style="left:74.8px;transform-origin:0 0;top:763.995px;font-size:13px;line-height:13px;color:#6c6c6c;transform:scaleX(0.9612);">1.1.5</span>
<span class="t" style="left:112.4px;transform-origin:0 0;top:763.995px;font-size:13px;line-height:13px;color:#0a0acd;transform:scaleX(0.8768);">SEGURIDAD Y SALUD</span>
<span class="t" style="left:946.956px;transform-origin:100% 0;top:763.995px;font-size:13px;line-height:13px;color:#0a0acd;transform:scaleX(0.9720);">40,805.13</span>
<div style="left:72px;top:783px;width:1808px;height:1px;background:#c6d8f3;"></div>
<div style="left:93px;top:784px;width:1px;height:27px;background:#c6d8f3;"></div>
<div style="left:729px;top:784px;width:1px;height:26px;background:#c6d8f3;"></div>
<div style="left:764px;top:784px;width:1px;height:26px;background:#c6d8f3;"></div>
<div style="left:824px;top:784px;width:1px;height:26px;background:#c6d8f3;"></div>
<div style="left:911px;top:784px;width:1px;height:26px;background:#c6d8f3;"></div>
<div style="left:1008px;top:784px;width:1px;height:27px;background:#8497b5;"></div>
<div style="left:1098px;top:784px;width:1px;height:26px;background:#c6d8f3;"></div>
<div style="left:1188px;top:784px;width:1px;height:26px;background:#c6d8f3;"></div>
<div style="left:1278px;top:784px;width:1px;height:26px;background:#c6d8f3;"></div>
<div style="left:1368px;top:784px;width:1px;height:26px;background:#c6d8f3;"></div>
<div style="left:1458px;top:784px;width:1px;height:26px;background:#c6d8f3;"></div>
<div style="left:1548px;top:784px;width:1px;height:26px;background:#c6d8f3;"></div>
<div style="left:1639px;top:784px;width:1px;height:27px;background:#8497b5;"></div>
<div style="left:1719px;top:784px;width:1px;height:26px;background:#c6d8f3;"></div>
<div style="left:1799px;top:784px;width:1px;height:26px;background:#c6d8f3;"></div>
<span class="t" style="left:95.8px;transform-origin:0 0;top:790.995px;font-size:13px;line-height:13px;color:#6c6c6c;transform:scaleX(0.9807);">1.1.5.1</span>
<span class="t" style="left:145px;transform-origin:0 0;top:790.995px;font-size:13px;line-height:13px;color:#000;transform:scaleX(0.9004);">ELABORACION, IMPLEMENTACION Y ADMINISTRACION DEL PLAN DE SEGURIDAD Y SALUD EN EL TR...</span>
<span class="t" style="left:734.5px;transform-origin:0 0;top:790.995px;font-size:13px;line-height:13px;color:#000;transform:scaleX(0.9700);">glb</span>
<span class="t" style="left:795.288px;transform-origin:100% 0;top:790.995px;font-size:13px;line-height:13px;color:#000;transform:scaleX(0.9650);">1.00</span>
<span class="t" style="left:849.756px;transform-origin:100% 0;top:790.995px;font-size:13px;line-height:13px;color:#000;transform:scaleX(0.9720);">10,872.00</span>
<span class="t" style="left:946.956px;transform-origin:100% 0;top:790.995px;font-size:13px;line-height:13px;color:#000;transform:scaleX(0.9720);">10,872.00</span>
<span class="t" style="left:1069.09px;transform-origin:100% 0;top:790.995px;font-size:13px;line-height:13px;color:#000;transform:scaleX(0.9650);">1.00</span>
<span class="t" style="left:1690.29px;transform-origin:100% 0;top:790.995px;font-size:13px;line-height:13px;color:#000;transform:scaleX(0.9650);">1.00</span>
<span class="t" style="left:1803.7px;transform-origin:0 0;top:790.995px;font-size:13px;line-height:13px;color:#000;transform:scaleX(0.9741);">100.00%</span>
<div style="left:93px;top:810px;width:1787px;height:1px;background:#c6d8f3;"></div>
<div style="left:93px;top:811px;width:1px;height:27px;background:#c6d8f3;"></div>
<div style="left:729px;top:811px;width:1px;height:26px;background:#c6d8f3;"></div>
<div style="left:764px;top:811px;width:1px;height:26px;background:#c6d8f3;"></div>
<div style="left:824px;top:811px;width:1px;height:26px;background:#c6d8f3;"></div>
<div style="left:911px;top:811px;width:1px;height:26px;background:#c6d8f3;"></div>
<div style="left:1008px;top:811px;width:1px;height:27px;background:#8497b5;"></div>
<div style="left:1098px;top:811px;width:1px;height:26px;background:#c6d8f3;"></div>
<div style="left:1188px;top:811px;width:1px;height:26px;background:#c6d8f3;"></div>
<div style="left:1278px;top:811px;width:1px;height:26px;background:#c6d8f3;"></div>
<div style="left:1368px;top:811px;width:1px;height:26px;background:#c6d8f3;"></div>
<div style="left:1458px;top:811px;width:1px;height:26px;background:#c6d8f3;"></div>
<div style="left:1548px;top:811px;width:1px;height:26px;background:#c6d8f3;"></div>
<div style="left:1639px;top:811px;width:1px;height:27px;background:#8497b5;"></div>
<div style="left:1719px;top:811px;width:1px;height:26px;background:#c6d8f3;"></div>
<div style="left:1799px;top:811px;width:1px;height:26px;background:#c6d8f3;"></div>
<span class="t" style="left:95.8px;transform-origin:0 0;top:817.995px;font-size:13px;line-height:13px;color:#6c6c6c;transform:scaleX(0.9807);">1.1.5.2</span>
<span class="t" style="left:145px;transform-origin:0 0;top:817.995px;font-size:13px;line-height:13px;color:#000;transform:scaleX(0.8920);">EQUIPOS DE PROTECCION INDIVIDUAL</span>
<span class="t" style="left:734.5px;transform-origin:0 0;top:817.995px;font-size:13px;line-height:13px;color:#000;transform:scaleX(0.9700);">und</span>
<span class="t" style="left:788.053px;transform-origin:100% 0;top:817.995px;font-size:13px;line-height:13px;color:#000;transform:scaleX(0.9650);">60.00</span>
<span class="t" style="left:867.834px;transform-origin:100% 0;top:817.995px;font-size:13px;line-height:13px;color:#000;transform:scaleX(0.9720);">309.00</span>
<span class="t" style="left:946.956px;transform-origin:100% 0;top:817.995px;font-size:13px;line-height:13px;color:#000;transform:scaleX(0.9720);">18,540.00</span>
<span class="t" style="left:1061.85px;transform-origin:100% 0;top:817.995px;font-size:13px;line-height:13px;color:#000;transform:scaleX(0.9650);">60.00</span>
<span class="t" style="left:1683.05px;transform-origin:100% 0;top:817.995px;font-size:13px;line-height:13px;color:#000;transform:scaleX(0.9650);">60.00</span>
<span class="t" style="left:1803.7px;transform-origin:0 0;top:817.995px;font-size:13px;line-height:13px;color:#000;transform:scaleX(0.9741);">100.00%</span>
<div style="left:93px;top:837px;width:1787px;height:1px;background:#c6d8f3;"></div>
<div style="left:93px;top:838px;width:1px;height:27px;background:#c6d8f3;"></div>
<div style="left:729px;top:838px;width:1px;height:26px;background:#c6d8f3;"></div>
<div style="left:764px;top:838px;width:1px;height:26px;background:#c6d8f3;"></div>
<div style="left:824px;top:838px;width:1px;height:26px;background:#c6d8f3;"></div>
<div style="left:911px;top:838px;width:1px;height:26px;background:#c6d8f3;"></div>
<div style="left:1008px;top:838px;width:1px;height:27px;background:#8497b5;"></div>
<div style="left:1098px;top:838px;width:1px;height:26px;background:#c6d8f3;"></div>
<div style="left:1188px;top:838px;width:1px;height:26px;background:#c6d8f3;"></div>
<div style="left:1278px;top:838px;width:1px;height:26px;background:#c6d8f3;"></div>
<div style="left:1368px;top:838px;width:1px;height:26px;background:#c6d8f3;"></div>
<div style="left:1458px;top:838px;width:1px;height:26px;background:#c6d8f3;"></div>
<div style="left:1548px;top:838px;width:1px;height:26px;background:#c6d8f3;"></div>
<div style="left:1639px;top:838px;width:1px;height:27px;background:#8497b5;"></div>
<div style="left:1719px;top:838px;width:1px;height:26px;background:#c6d8f3;"></div>
<div style="left:1799px;top:838px;width:1px;height:26px;background:#c6d8f3;"></div>
<span class="t" style="left:95.8px;transform-origin:0 0;top:844.995px;font-size:13px;line-height:13px;color:#6c6c6c;transform:scaleX(0.9807);">1.1.5.3</span>
<span class="t" style="left:145px;transform-origin:0 0;top:844.995px;font-size:13px;line-height:13px;color:#000;transform:scaleX(0.8928);">EQUIPOS DE PROTECCION COLECTIVA</span>
<span class="t" style="left:734.5px;transform-origin:0 0;top:844.995px;font-size:13px;line-height:13px;color:#000;transform:scaleX(0.9700);">glb</span>
<span class="t" style="left:795.288px;transform-origin:100% 0;top:844.995px;font-size:13px;line-height:13px;color:#000;transform:scaleX(0.9650);">1.00</span>
<span class="t" style="left:856.991px;transform-origin:100% 0;top:844.995px;font-size:13px;line-height:13px;color:#000;transform:scaleX(0.9720);">7,722.00</span>
<span class="t" style="left:954.191px;transform-origin:100% 0;top:844.995px;font-size:13px;line-height:13px;color:#000;transform:scaleX(0.9720);">7,722.00</span>
<span class="t" style="left:1069.09px;transform-origin:100% 0;top:844.995px;font-size:13px;line-height:13px;color:#000;transform:scaleX(0.9650);">1.00</span>
<span class="t" style="left:1690.29px;transform-origin:100% 0;top:844.995px;font-size:13px;line-height:13px;color:#000;transform:scaleX(0.9650);">1.00</span>
<span class="t" style="left:1803.7px;transform-origin:0 0;top:844.995px;font-size:13px;line-height:13px;color:#000;transform:scaleX(0.9741);">100.00%</span>
<div style="left:93px;top:864px;width:1787px;height:1px;background:#c6d8f3;"></div>
<div style="left:93px;top:865px;width:1px;height:27px;background:#c6d8f3;"></div>
<div style="left:729px;top:865px;width:1px;height:26px;background:#c6d8f3;"></div>
<div style="left:764px;top:865px;width:1px;height:26px;background:#c6d8f3;"></div>
<div style="left:824px;top:865px;width:1px;height:26px;background:#c6d8f3;"></div>
<div style="left:911px;top:865px;width:1px;height:26px;background:#c6d8f3;"></div>
<div style="left:1008px;top:865px;width:1px;height:27px;background:#8497b5;"></div>
<div style="left:1098px;top:865px;width:1px;height:26px;background:#c6d8f3;"></div>
<div style="left:1188px;top:865px;width:1px;height:26px;background:#c6d8f3;"></div>
<div style="left:1278px;top:865px;width:1px;height:26px;background:#c6d8f3;"></div>
<div style="left:1368px;top:865px;width:1px;height:26px;background:#c6d8f3;"></div>
<div style="left:1458px;top:865px;width:1px;height:26px;background:#c6d8f3;"></div>
<div style="left:1548px;top:865px;width:1px;height:26px;background:#c6d8f3;"></div>
<div style="left:1639px;top:865px;width:1px;height:27px;background:#8497b5;"></div>
<div style="left:1719px;top:865px;width:1px;height:26px;background:#c6d8f3;"></div>
<div style="left:1799px;top:865px;width:1px;height:26px;background:#c6d8f3;"></div>
<span class="t" style="left:95.8px;transform-origin:0 0;top:871.995px;font-size:13px;line-height:13px;color:#6c6c6c;transform:scaleX(0.9807);">1.1.5.4</span>
<span class="t" style="left:145px;transform-origin:0 0;top:871.995px;font-size:13px;line-height:13px;color:#000;transform:scaleX(0.8875);">SEÑALIZACION TEMPORAL DE SEGURIDAD</span>
<span class="t" style="left:734.5px;transform-origin:0 0;top:871.995px;font-size:13px;line-height:13px;color:#000;transform:scaleX(0.9700);">glb</span>
<span class="t" style="left:795.288px;transform-origin:100% 0;top:871.995px;font-size:13px;line-height:13px;color:#000;transform:scaleX(0.9650);">1.00</span>
<span class="t" style="left:867.834px;transform-origin:100% 0;top:871.995px;font-size:13px;line-height:13px;color:#000;transform:scaleX(0.9720);">857.60</span>
<span class="t" style="left:965.034px;transform-origin:100% 0;top:871.995px;font-size:13px;line-height:13px;color:#000;transform:scaleX(0.9720);">857.60</span>
<span class="t" style="left:1069.09px;transform-origin:100% 0;top:871.995px;font-size:13px;line-height:13px;color:#000;transform:scaleX(0.9650);">1.00</span>
<span class="t" style="left:1690.29px;transform-origin:100% 0;top:871.995px;font-size:13px;line-height:13px;color:#000;transform:scaleX(0.9650);">1.00</span>
<span class="t" style="left:1803.7px;transform-origin:0 0;top:871.995px;font-size:13px;line-height:13px;color:#000;transform:scaleX(0.9741);">100.00%</span>
<div style="left:9px;top:890px;width:1892px;height:1px;background:#8fa8cd;"></div>
<div style="left:9px;top:891px;width:1892px;height:26px;background:linear-gradient(#f2f7fd,#e4edf9 50%,#dde8f6);"></div>
<span class="t" style="left:798.3px;transform-origin:0 0;top:897.295px;font-size:13px;line-height:13px;color:#2a3968;transform:scaleX(1.0021);">Total costo directo</span>
<span class="t" style="left:926.894px;transform-origin:100% 0;top:898.995px;font-size:13px;line-height:13px;color:#2a3968;transform:scaleX(0.9815);">3,404,020.25</span>
<div style="left:1006px;top:895px;width:1px;height:18px;background:#8fa8cd;"></div>
<div style="left:1566px;top:922px;width:332px;height:23px;background:#fff;border:1px solid #9db3d5;box-sizing:border-box;"></div>
<span class="t" style="left:1578.3px;transform-origin:0 0;top:927.395px;font-size:13px;line-height:13px;color:#8c8c8c;transform:scaleX(0.9954);">Ingrese el texto a buscar</span>
<div style="left:1783px;top:923px;width:1px;height:21px;background:#9db3d5;"></div>
<div style="left:1784px;top:923px;width:19px;height:21px;background:#dfe9f7;"></div>
<svg style="left:1786px;top:926px" width="15" height="15"><circle cx="8.6" cy="6" r="3.3" fill="none" stroke="#3c4a6e" stroke-width="1.4"/><path d="M6.2 8.6 L2.4 12.6" stroke="#3c4a6e" stroke-width="1.8"/></svg>
<svg style="left:1806px;top:927px" width="14" height="14"><circle cx="7" cy="7" r="6" fill="#c4c6cb"/><path d="M4.4 4.4 L9.6 9.6 M9.6 4.4 L4.4 9.6" stroke="#fff" stroke-width="1.5"/></svg>
<div style="left:1823px;top:923px;width:1px;height:21px;background:#9db3d5;"></div>
<div style="left:1824px;top:923px;width:19px;height:21px;background:#dfe9f7;"></div>
<svg style="left:1826px;top:930px" width="16" height="8"><path d="M4.6 1.5 L2 4 L4.6 6.5 Z M10.6 1.5 L13.2 4 L10.6 6.5 Z" fill="#3c4a6e"/></svg>
<div style="left:1843px;top:923px;width:1px;height:21px;background:#9db3d5;"></div>
<span class="t" style="left:1852.6px;transform-origin:0 0;top:927.395px;font-size:13px;line-height:13px;color:#a9afc6;transform:scaleX(0.9680);">0 de 0</span>
<div style="left:6px;top:956px;width:161px;height:31px;background:linear-gradient(#a9c0de,#b3c8e3 50%,#bacde6);border:1px solid #8da8cf;border-top:none;border-left-color:#9fb6d8;box-sizing:border-box;"></div>
<span class="t" style="left:35.3px;transform-origin:0 0;top:964.782px;font-size:14.67px;line-height:14.67px;color:#1e2c5c;transform:scaleX(0.9665);">Datos Generales</span>
<div style="left:318px;top:956px;width:157px;height:31px;background:linear-gradient(#a9c0de,#b3c8e3 50%,#bacde6);border:1px solid #8da8cf;border-top:none;border-left-color:#9fb6d8;box-sizing:border-box;"></div>
<span class="t" style="left:328.3px;transform-origin:0 0;top:964.782px;font-size:14.67px;line-height:14.67px;color:#1e2c5c;transform:scaleX(0.9686);">Indices de Precios</span>
<div style="left:475px;top:956px;width:122px;height:31px;background:linear-gradient(#a9c0de,#b3c8e3 50%,#bacde6);border:1px solid #8da8cf;border-top:none;border-left-color:#9fb6d8;box-sizing:border-box;"></div>
<span class="t" style="left:485px;transform-origin:0 0;top:964.782px;font-size:14.67px;line-height:14.67px;color:#1e2c5c;transform:scaleX(0.9959);">K de Reajuste</span>
<div style="left:597px;top:956px;width:185px;height:31px;background:linear-gradient(#a9c0de,#b3c8e3 50%,#bacde6);border:1px solid #8da8cf;border-top:none;border-left-color:#9fb6d8;box-sizing:border-box;"></div>
<span class="t" style="left:607px;transform-origin:0 0;top:964.782px;font-size:14.67px;line-height:14.67px;color:#1e2c5c;transform:scaleX(0.9743);">Reajustes por Periodo</span>
<div style="left:782px;top:956px;width:229px;height:31px;background:linear-gradient(#a9c0de,#b3c8e3 50%,#bacde6);border:1px solid #8da8cf;border-top:none;border-left-color:#9fb6d8;box-sizing:border-box;"></div>
<span class="t" style="left:792.3px;transform-origin:0 0;top:964.782px;font-size:14.67px;line-height:14.67px;color:#1e2c5c;transform:scaleX(0.9788);">Grafico Programado vs Real</span>
<div style="left:167px;top:955px;width:152px;height:34px;background:#4d80c0;border:1px solid #2f5c9e;border-top-color:#4d80c0;box-sizing:border-box;"></div>
<span class="t" style="left:178.2px;transform-origin:0 0;top:965.582px;font-size:14.67px;line-height:14.67px;color:#fff;font-weight:bold;transform:scaleX(1.0641);">Hoja de Metrados</span>
<svg style="left:16px;top:962px" width="18" height="18" viewBox="16 962 18 18"><rect x="19.5" y="963.5" width="9" height="8" fill="#f2fbef" stroke="#5cb33e" stroke-width="1.2"/><rect x="17.6" y="965.6" width="9" height="11" fill="#f6fafe" stroke="#6f97d2" stroke-width="1.1"/><path d="M19.3 968.3 H24.6 M19.3 970.4 H24.6 M19.3 972.5 H22.5" stroke="#9aa3b5" stroke-width="1"/><path d="M32.15 973.27 L32.15 974.73 L30.78 974.97 L30.36 975.99 L31.16 977.12 L30.12 978.16 L28.99 977.36 L27.97 977.78 L27.73 979.15 L26.27 979.15 L26.03 977.78 L25.01 977.36 L23.88 978.16 L22.84 977.12 L23.64 975.99 L23.22 974.97 L21.85 974.73 L21.85 973.27 L23.22 973.03 L23.64 972.01 L22.84 970.88 L23.88 969.84 L25.01 970.64 L26.03 970.22 L26.27 968.85 L27.73 968.85 L27.97 970.22 L28.99 970.64 L30.12 969.84 L31.16 970.88 L30.36 972.01 L30.78 973.03 Z" fill="#f3f6fb" stroke="#2c5a8c" stroke-width="1.25" stroke-linejoin="round"/><circle cx="27" cy="974" r="1.7" fill="#aebfd6" stroke="#4f7099" stroke-width="1"/></svg>
<div style="left:0px;top:991px;width:1920px;height:39px;background:linear-gradient(#c0cde3 0,#ccd8ec 3px,#d0dcee 5px);"></div>
<div style="left:4px;top:990px;width:262px;height:39px;background:#b8860b;border:1px solid #6b5a00;border-top:none;box-sizing:border-box;"></div>
<span class="t" style="left:15.2px;transform-origin:0 0;top:1002.26px;font-size:16px;line-height:16px;color:#fdf6e6;transform:scaleX(1.0157);">VALORIZACION</span>
<span class="t" style="left:146.4px;transform-origin:0 0;top:1002.26px;font-size:16px;line-height:16px;color:#fdf6e6;transform:scaleX(0.9519);">FORMUL...</span>
<svg style="left:246px;top:1005px" width="11" height="9"><path d="M0.8 0.9 L3.9 0.9 L5.35 2.9 L6.8 0.9 L9.9 0.9 L7 4.5 L10 8.1 L6.9 8.1 L5.35 6.1 L3.8 8.1 L0.7 8.1 L3.7 4.5 Z" fill="#fff"/></svg>
</body></html>
